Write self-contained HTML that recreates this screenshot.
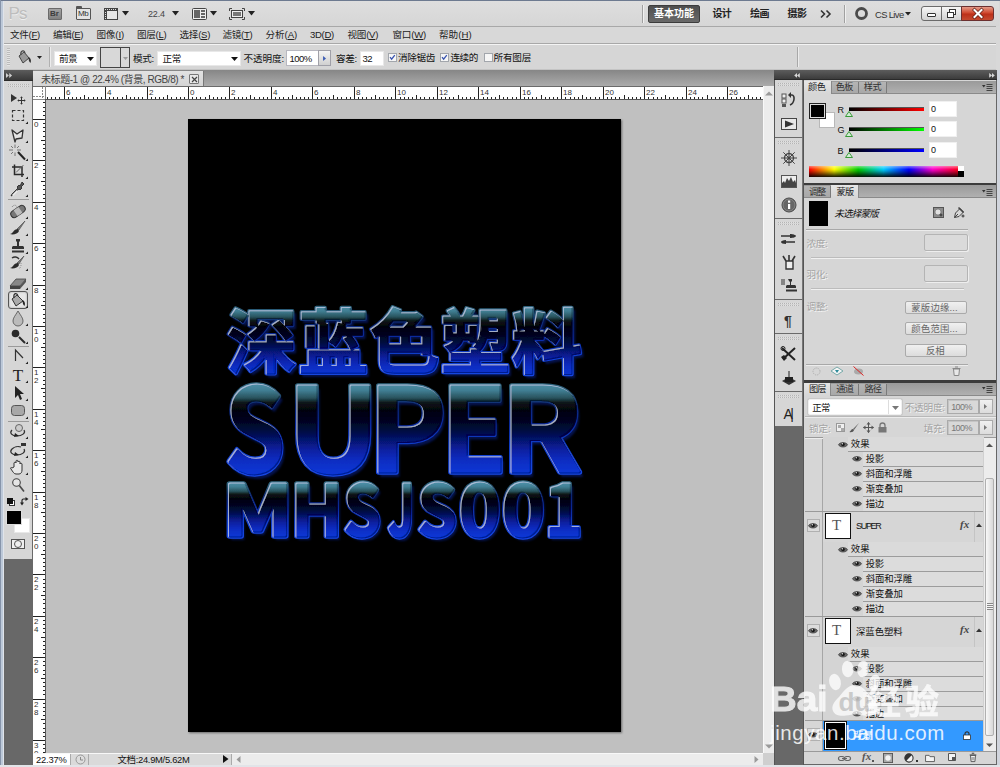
<!DOCTYPE html><html lang="zh"><head><meta charset="utf-8"><title>Photoshop</title><style>
*{box-sizing:border-box;margin:0;padding:0}
html,body{width:1000px;height:767px;overflow:hidden;background:#d6d6d6}
body{position:relative;font-family:"Liberation Sans","Noto Sans CJK SC",sans-serif;font-size:12px;color:#111}
.a{position:absolute}
.t{position:absolute;white-space:nowrap;line-height:1}
.menu .t{top:33px;font-size:11px;color:#222;letter-spacing:0}
.menu u{text-decoration:underline;text-underline-offset:1px}
.wb{background:#fff}
.sep{position:absolute;background:#a0a0a0}
svg{position:absolute;overflow:visible}
</style></head><body>
<div class="a" style="left:0;top:0;width:1000px;height:767px;background:#d8d8d8"></div>
<div class="a" id="appbar" style="left:1px;top:1px;width:998px;height:25px;background:linear-gradient(#dedede,#d6d6d6)"></div>
<div class="a" style="left:4px;top:26px;width:992px;height:1px;background:#a8a8a8"></div>


<!-- Br button -->
<div class="a" style="left:48px;top:8px;width:14px;height:12px;background:linear-gradient(#a4a4a4,#808080);border:1px solid #6a6a6a;border-radius:1px"></div>
<div class="t" style="left:50px;top:10px;font-size:8px;font-weight:bold;color:#3c3c3c">Br</div>
<!-- Mb button -->
<div class="a" style="left:76px;top:8px;width:15px;height:12px;background:#e4e4e4;border:1px solid #555;border-radius:1px"></div>
<div class="a" style="left:76px;top:6px;width:6px;height:3px;background:#555;border-radius:1px 1px 0 0"></div>
<div class="t" style="left:78px;top:10px;font-size:8px;color:#333;letter-spacing:-0.3px">Mb</div>
<!-- film icon -->
<svg style="left:104px;top:8px" width="14" height="12" viewBox="0 0 14 12"><rect x="0.5" y="0.5" width="13" height="11" fill="#e8e8e8" stroke="#444"/><rect x="0" y="0" width="14" height="3" fill="#444"/><rect x="0" y="3" width="3" height="9" fill="#444"/><g fill="#ddd"><rect x="1" y="1" width="1" height="1"/><rect x="3" y="1" width="1" height="1"/><rect x="5" y="1" width="1" height="1"/><rect x="7" y="1" width="1" height="1"/><rect x="9" y="1" width="1" height="1"/><rect x="11" y="1" width="1" height="1"/><rect x="1" y="4" width="1" height="1"/><rect x="1" y="6" width="1" height="1"/><rect x="1" y="8" width="1" height="1"/><rect x="1" y="10" width="1" height="1"/></g></svg>
<svg style="left:122px;top:11px" width="7" height="5"><path d="M0 0h7L3.5 4.5z" fill="#222"/></svg>
<svg style="left:172px;top:11px" width="7" height="5"><path d="M0 0h7L3.5 4.5z" fill="#222"/></svg>
<!-- arrange icon -->
<svg style="left:192px;top:8px" width="15" height="12" viewBox="0 0 15 12"><rect x="0.5" y="0.5" width="14" height="11" fill="#eee" stroke="#444" rx="1"/><rect x="2" y="2" width="6" height="8" fill="#666"/><rect x="9" y="2" width="4" height="2" fill="#666"/><rect x="9" y="5" width="4" height="2" fill="#666"/><rect x="9" y="8" width="4" height="2" fill="#666"/></svg>
<svg style="left:210px;top:11px" width="7" height="5"><path d="M0 0h7L3.5 4.5z" fill="#222"/></svg>
<!-- screen mode icon -->
<svg style="left:229px;top:8px" width="16" height="12" viewBox="0 0 16 12"><path d="M0.5 3V0.5H3M13 0.5h2.5V3M15.5 9v2.5H13M3 11.5H0.5V9" fill="none" stroke="#444"/><rect x="2.5" y="2.5" width="11" height="7" fill="#eee" stroke="#444"/><rect x="4" y="4" width="8" height="4" fill="#777"/></svg>
<svg style="left:248px;top:11px" width="7" height="5"><path d="M0 0h7L3.5 4.5z" fill="#222"/></svg>

<!-- workspace switcher -->
<div class="a" style="left:642px;top:5px;width:1px;height:18px;background:#a0a0a0"></div>
<div class="a" style="left:643px;top:5px;width:1px;height:18px;background:#f0f0f0"></div>
<div class="a" style="left:648px;top:5px;width:52px;height:18px;background:linear-gradient(#4e4e4e,#6a6a6a);border:1px solid #3c3c3c;border-radius:2px"></div>
<svg style="left:820px;top:10px" width="12" height="8" viewBox="0 0 12 8"><path d="M1 0.5L4.5 4L1 7.5M6.5 0.5L10 4L6.5 7.5" fill="none" stroke="#333" stroke-width="1.6"/></svg>
<div class="a" style="left:844px;top:5px;width:1px;height:18px;background:#a0a0a0"></div>
<div class="a" style="left:845px;top:5px;width:1px;height:18px;background:#f0f0f0"></div>
<svg style="left:855px;top:7px" width="13" height="13" viewBox="0 0 13 13"><circle cx="6.5" cy="6.5" r="5" fill="none" stroke="#4a4a4a" stroke-width="2.800"/></svg>
<svg style="left:905px;top:12px" width="6" height="4"><path d="M0 0h6L3 3.5z" fill="#222"/></svg>
<!-- window buttons -->
<div class="a" style="left:921px;top:6px;width:21px;height:14.500px;background:linear-gradient(#f6f6f6,#d2d2d2);border:1px solid #6b6b6b;border-radius:3px 0 0 3px"></div>
<div class="a" style="left:926.500px;top:13px;width:9px;height:4px;border:1px solid #333;background:#fff;border-radius:1px"></div>
<div class="a" style="left:941px;top:6px;width:21px;height:14.500px;background:linear-gradient(#f6f6f6,#d2d2d2);border:1px solid #6b6b6b"></div>
<div class="a" style="left:949px;top:9px;width:7px;height:6px;border:1px solid #333;background:#fff"></div>
<div class="a" style="left:946.500px;top:11.500px;width:7px;height:6px;border:1px solid #333;background:#fff"></div>
<div class="a" style="left:961px;top:6px;width:33px;height:14.500px;background:linear-gradient(#e49a88,#d0492f 45%,#bc3019 55%,#c44a30);border:1px solid #6b3030;border-radius:0 3px 3px 0"></div>
<svg style="left:972.500px;top:9px" width="10" height="9" viewBox="0 0 10 9"><path d="M1.500 1L8.500 8M8.500 1L1.500 8" stroke="#5a1a10" stroke-width="3.400" stroke-linecap="square"/><path d="M1.500 1L8.500 8M8.500 1L1.500 8" stroke="#fff" stroke-width="2.100" stroke-linecap="square"/></svg>

<div class="t" style="left:654px;top:8.5px;font-size:10px;color:#fff;letter-spacing:0.000px;font-weight:bold">基本功能</div>
<div class="t" style="left:712.5px;top:8.5px;font-size:10px;color:#222;letter-spacing:-0.750px;font-weight:bold">设计</div>
<div class="t" style="left:750px;top:8.5px;font-size:10px;color:#222;letter-spacing:-0.500px;font-weight:bold">绘画</div>
<div class="t" style="left:787.5px;top:8.5px;font-size:10px;color:#222;letter-spacing:-0.500px;font-weight:bold">摄影</div>
<div class="t" style="left:875px;top:9.5px;font-size:9.4px;color:#333;letter-spacing:-0.618px;">CS Live</div>
<div class="t" style="left:148px;top:9.5px;font-size:9px;color:#444;letter-spacing:-0.133px;">22.4</div>
<div class="t" style="left:8.6px;top:4.5px;font-size:17px;color:#bdbdbd;letter-spacing:-0.922px;text-shadow:0 1px 0 #eee">Ps</div>
<div class="t" style="left:10px;top:30px;font-size:9.6px;color:#222;letter-spacing:-0.294px;text-underline-offset:1px">文件(<u>F</u>)</div>
<div class="t" style="left:53px;top:30px;font-size:9.6px;color:#222;letter-spacing:-0.400px;text-underline-offset:1px">编辑(<u>E</u>)</div>
<div class="t" style="left:96.4px;top:30px;font-size:9.6px;color:#222;letter-spacing:-0.133px;text-underline-offset:1px">图像(<u>I</u>)</div>
<div class="t" style="left:137px;top:30px;font-size:9.6px;color:#222;letter-spacing:-0.307px;text-underline-offset:1px">图层(<u>L</u>)</div>
<div class="t" style="left:179.6px;top:30px;font-size:9.6px;color:#222;letter-spacing:-0.320px;text-underline-offset:1px">选择(<u>S</u>)</div>
<div class="t" style="left:222.6px;top:30px;font-size:9.6px;color:#222;letter-spacing:-0.334px;text-underline-offset:1px">滤镜(<u>T</u>)</div>
<div class="t" style="left:265.6px;top:30px;font-size:9.6px;color:#222;letter-spacing:-0.120px;text-underline-offset:1px">分析(<u>A</u>)</div>
<div class="t" style="left:310px;top:30px;font-size:9.6px;color:#222;letter-spacing:-0.322px;text-underline-offset:1px">3D(<u>D</u>)</div>
<div class="t" style="left:347.6px;top:30px;font-size:9.6px;color:#222;letter-spacing:-0.320px;text-underline-offset:1px">视图(<u>V</u>)</div>
<div class="t" style="left:392.4px;top:30px;font-size:9.6px;color:#222;letter-spacing:-0.211px;text-underline-offset:1px">窗口(<u>W</u>)</div>
<div class="t" style="left:439px;top:30px;font-size:9.6px;color:#222;letter-spacing:0.014px;text-underline-offset:1px">帮助(<u>H</u>)</div>

<div class="a" style="left:4px;top:44px;width:992px;height:26px;background:#d6d6d6;border-top:1px solid #f4f4f4;border-bottom:1px solid #c4c4c4"></div>
<div class="a" style="left:4px;top:43px;width:992px;height:1px;background:#a8a8a8"></div>
<div class="a" style="left:7px;top:48px;width:3px;height:18px;background:repeating-linear-gradient(#bbb 0 1px,#e4e4e4 1px 2px)"></div>
<!-- bucket -->
<svg style="left:16px;top:49px" width="17" height="16" viewBox="0 0 17 16"><path d="M3 7L8 3L13 9L7 14Z" fill="#999" stroke="#444" stroke-width="1"/><path d="M5 6C4 2 8 0 9 4" fill="none" stroke="#444" stroke-width="1.2"/><path d="M12.5 8C15 9 15.5 12 14.5 14C13 13 12.5 11 12.5 8Z" fill="#333"/></svg>
<svg style="left:37px;top:56px" width="5" height="3"><path d="M0 0h5L2.5 3z" fill="#222"/></svg>
<div class="sep" style="left:49px;top:47px;width:1px;height:20px;background:#b0b0b0"></div>
<div class="sep" style="left:50px;top:47px;width:1px;height:20px;background:#ececec"></div>
<div class="a wb" style="left:54px;top:51px;width:43px;height:15px;border:1px solid #e8e8e8"></div>
<svg style="left:87px;top:57px" width="7" height="4"><path d="M0 0h7L3.5 4z" fill="#111"/></svg>
<div class="a" style="left:100px;top:47px;width:30px;height:21px;border:1px solid #444;background:#d8d8d8"></div>
<div class="a" style="left:120px;top:47px;width:1px;height:21px;background:#444"></div>
<svg style="left:123px;top:57px" width="5" height="3"><path d="M0 0h5L2.5 3z" fill="#999"/></svg>
<div class="a wb" style="left:157px;top:51px;width:84px;height:15px;border:1px solid #e8e8e8"></div>
<svg style="left:231px;top:57px" width="7" height="4"><path d="M0 0h7L3.5 4z" fill="#111"/></svg>
<div class="a wb" style="left:286px;top:50px;width:33px;height:16px;border:1px solid #b8b8c0"></div>
<div class="a" style="left:318px;top:50px;width:13px;height:16px;border:1px solid #a0a0a8;background:linear-gradient(#f4f4f4,#d0d0d0)"></div>
<svg style="left:323px;top:56px" width="3.500" height="5" viewBox="0 0 4 6"><path d="M0 0v6L3.5 3z" fill="#3c5cb4"/></svg>
<div class="a wb" style="left:360px;top:51px;width:24px;height:15px;border:1px solid #e8e8e8"></div>

<div class="t" style="left:59px;top:53.5px;font-size:9.6px;color:#111;letter-spacing:-0.594px;">前景</div>
<div class="t" style="left:133px;top:53.5px;font-size:9.6px;color:#111;letter-spacing:-0.286px;">模式:</div>
<div class="t" style="left:162.4px;top:53.5px;font-size:9.6px;color:#111;letter-spacing:-0.294px;">正常</div>
<div class="t" style="left:243.6px;top:53.5px;font-size:9.6px;color:#111;letter-spacing:-0.129px;">不透明度:</div>
<div class="t" style="left:289.6px;top:53.7px;font-size:9.5px;color:#111;letter-spacing:-0.578px;">100%</div>
<div class="t" style="left:336px;top:53.5px;font-size:9.6px;color:#111;letter-spacing:-0.286px;">容差:</div>
<div class="t" style="left:362.4px;top:53.7px;font-size:9.5px;color:#111;letter-spacing:-0.489px;">32</div>
<div class="a" style="left:387.5px;top:53px;width:9px;height:9px;border:1px solid #a2a6ac;background:#f6f6f6"></div>
<svg style="left:388.5px;top:54px" width="7" height="7" viewBox="0 0 8 8"><path d="M1.2 3.6L3 6L6.6 1.2" fill="none" stroke="#3a55b0" stroke-width="1.5"/></svg>
<div class="t" style="left:398px;top:52.5px;font-size:9.6px;color:#111;letter-spacing:-0.344px;">消除锯齿</div>
<div class="a" style="left:439.5px;top:53px;width:9px;height:9px;border:1px solid #a2a6ac;background:#f6f6f6"></div>
<svg style="left:440.5px;top:54px" width="7" height="7" viewBox="0 0 8 8"><path d="M1.2 3.6L3 6L6.6 1.2" fill="none" stroke="#3a55b0" stroke-width="1.5"/></svg>
<div class="t" style="left:450.4px;top:52.5px;font-size:9.6px;color:#111;letter-spacing:-0.394px;">连续的</div>
<div class="a" style="left:483.5px;top:53px;width:9px;height:9px;border:1px solid #a2a6ac;background:#f6f6f6"></div>
<div class="t" style="left:493.6px;top:52.5px;font-size:9.6px;color:#111;letter-spacing:-0.244px;">所有图层</div>
<div class="sep" style="left:797px;top:47px;width:1px;height:20px;background:#a8a8a8"></div><div class="sep" style="left:798px;top:47px;width:1px;height:20px;background:#ececec"></div>

<!-- tab bar -->
<div class="a" style="left:33px;top:70px;width:741px;height:16px;background:linear-gradient(#868686,#ababab)"></div>
<div class="a" style="left:33px;top:71px;width:171px;height:15px;background:linear-gradient(#e2e2e2,#d4d4d4);border-right:1px solid #777"></div>

<div class="a" style="left:189px;top:74px;width:10px;height:10px;border:1px solid #777;background:#e8e8e8;border-radius:1px"></div>
<svg style="left:190.5px;top:75.5px" width="7" height="7" viewBox="0 0 7 7"><path d="M1 1L6 6M6 1L1 6" stroke="#444" stroke-width="1.2"/></svg>
<!-- canvas bg -->
<div class="a" style="left:33px;top:86px;width:741px;height:679px;background:#c0c0c0"></div>
<!-- document -->
<div class="a" style="left:188px;top:119px;width:433px;height:613px;background:#000;box-shadow:1px 1px 2px rgba(0,0,0,.45)"></div>

<div class="t" style="left:41px;top:74.5px;font-size:10px;color:#444;letter-spacing:-0.431px;">未标题-1 @ 22.4% (背景, RGB/8) *</div>
<svg style="left:33px;top:86.6px" width="730" height="13" viewBox="0 0 730 13" shape-rendering="crispEdges"><rect width="730" height="13" fill="#fff"/><g stroke="#222" stroke-width="1"><line x1="14.5" y1="10" x2="14.5" y2="13"/><line x1="18.5" y1="10" x2="18.5" y2="13"/><line x1="22.5" y1="10" x2="22.5" y2="13"/><line x1="26.5" y1="10" x2="26.5" y2="13"/><line x1="31.5" y1="0" x2="31.5" y2="13"/><line x1="35.5" y1="10" x2="35.5" y2="13"/><line x1="39.5" y1="10" x2="39.5" y2="13"/><line x1="43.5" y1="10" x2="43.5" y2="13"/><line x1="47.5" y1="10" x2="47.5" y2="13"/><line x1="51.5" y1="8" x2="51.5" y2="13"/><line x1="55.5" y1="10" x2="55.5" y2="13"/><line x1="60.5" y1="10" x2="60.5" y2="13"/><line x1="64.5" y1="10" x2="64.5" y2="13"/><line x1="68.5" y1="10" x2="68.5" y2="13"/><line x1="72.5" y1="0" x2="72.5" y2="13"/><line x1="76.5" y1="10" x2="76.5" y2="13"/><line x1="80.5" y1="10" x2="80.5" y2="13"/><line x1="84.5" y1="10" x2="84.5" y2="13"/><line x1="89.5" y1="10" x2="89.5" y2="13"/><line x1="93.5" y1="8" x2="93.5" y2="13"/><line x1="97.5" y1="10" x2="97.5" y2="13"/><line x1="101.5" y1="10" x2="101.5" y2="13"/><line x1="105.5" y1="10" x2="105.5" y2="13"/><line x1="109.5" y1="10" x2="109.5" y2="13"/><line x1="114.5" y1="0" x2="114.5" y2="13"/><line x1="118.5" y1="10" x2="118.5" y2="13"/><line x1="122.5" y1="10" x2="122.5" y2="13"/><line x1="126.5" y1="10" x2="126.5" y2="13"/><line x1="130.5" y1="10" x2="130.5" y2="13"/><line x1="134.5" y1="8" x2="134.5" y2="13"/><line x1="138.5" y1="10" x2="138.5" y2="13"/><line x1="143.5" y1="10" x2="143.5" y2="13"/><line x1="147.5" y1="10" x2="147.5" y2="13"/><line x1="151.5" y1="10" x2="151.5" y2="13"/><line x1="155.5" y1="0" x2="155.5" y2="13"/><line x1="159.5" y1="10" x2="159.5" y2="13"/><line x1="163.5" y1="10" x2="163.5" y2="13"/><line x1="167.5" y1="10" x2="167.5" y2="13"/><line x1="172.5" y1="10" x2="172.5" y2="13"/><line x1="176.5" y1="8" x2="176.5" y2="13"/><line x1="180.5" y1="10" x2="180.5" y2="13"/><line x1="184.5" y1="10" x2="184.5" y2="13"/><line x1="188.5" y1="10" x2="188.5" y2="13"/><line x1="192.5" y1="10" x2="192.5" y2="13"/><line x1="196.5" y1="0" x2="196.5" y2="13"/><line x1="201.5" y1="10" x2="201.5" y2="13"/><line x1="205.5" y1="10" x2="205.5" y2="13"/><line x1="209.5" y1="10" x2="209.5" y2="13"/><line x1="213.5" y1="10" x2="213.5" y2="13"/><line x1="217.5" y1="8" x2="217.5" y2="13"/><line x1="221.5" y1="10" x2="221.5" y2="13"/><line x1="226.5" y1="10" x2="226.5" y2="13"/><line x1="230.5" y1="10" x2="230.5" y2="13"/><line x1="234.5" y1="10" x2="234.5" y2="13"/><line x1="238.5" y1="0" x2="238.5" y2="13"/><line x1="242.5" y1="10" x2="242.5" y2="13"/><line x1="246.5" y1="10" x2="246.5" y2="13"/><line x1="250.5" y1="10" x2="250.5" y2="13"/><line x1="255.5" y1="10" x2="255.5" y2="13"/><line x1="259.5" y1="8" x2="259.5" y2="13"/><line x1="263.5" y1="10" x2="263.5" y2="13"/><line x1="267.5" y1="10" x2="267.5" y2="13"/><line x1="271.5" y1="10" x2="271.5" y2="13"/><line x1="275.5" y1="10" x2="275.5" y2="13"/><line x1="279.5" y1="0" x2="279.5" y2="13"/><line x1="284.5" y1="10" x2="284.5" y2="13"/><line x1="288.5" y1="10" x2="288.5" y2="13"/><line x1="292.5" y1="10" x2="292.5" y2="13"/><line x1="296.5" y1="10" x2="296.5" y2="13"/><line x1="300.5" y1="8" x2="300.5" y2="13"/><line x1="304.5" y1="10" x2="304.5" y2="13"/><line x1="308.5" y1="10" x2="308.5" y2="13"/><line x1="313.5" y1="10" x2="313.5" y2="13"/><line x1="317.5" y1="10" x2="317.5" y2="13"/><line x1="321.5" y1="0" x2="321.5" y2="13"/><line x1="325.5" y1="10" x2="325.5" y2="13"/><line x1="329.5" y1="10" x2="329.5" y2="13"/><line x1="333.5" y1="10" x2="333.5" y2="13"/><line x1="338.5" y1="10" x2="338.5" y2="13"/><line x1="342.5" y1="8" x2="342.5" y2="13"/><line x1="346.5" y1="10" x2="346.5" y2="13"/><line x1="350.5" y1="10" x2="350.5" y2="13"/><line x1="354.5" y1="10" x2="354.5" y2="13"/><line x1="358.5" y1="10" x2="358.5" y2="13"/><line x1="362.5" y1="0" x2="362.5" y2="13"/><line x1="367.5" y1="10" x2="367.5" y2="13"/><line x1="371.5" y1="10" x2="371.5" y2="13"/><line x1="375.5" y1="10" x2="375.5" y2="13"/><line x1="379.5" y1="10" x2="379.5" y2="13"/><line x1="383.5" y1="8" x2="383.5" y2="13"/><line x1="387.5" y1="10" x2="387.5" y2="13"/><line x1="391.5" y1="10" x2="391.5" y2="13"/><line x1="396.5" y1="10" x2="396.5" y2="13"/><line x1="400.5" y1="10" x2="400.5" y2="13"/><line x1="404.5" y1="0" x2="404.5" y2="13"/><line x1="408.5" y1="10" x2="408.5" y2="13"/><line x1="412.5" y1="10" x2="412.5" y2="13"/><line x1="416.5" y1="10" x2="416.5" y2="13"/><line x1="420.5" y1="10" x2="420.5" y2="13"/><line x1="425.5" y1="8" x2="425.5" y2="13"/><line x1="429.5" y1="10" x2="429.5" y2="13"/><line x1="433.5" y1="10" x2="433.5" y2="13"/><line x1="437.5" y1="10" x2="437.5" y2="13"/><line x1="441.5" y1="10" x2="441.5" y2="13"/><line x1="445.5" y1="0" x2="445.5" y2="13"/><line x1="450.5" y1="10" x2="450.5" y2="13"/><line x1="454.5" y1="10" x2="454.5" y2="13"/><line x1="458.5" y1="10" x2="458.5" y2="13"/><line x1="462.5" y1="10" x2="462.5" y2="13"/><line x1="466.5" y1="8" x2="466.5" y2="13"/><line x1="470.5" y1="10" x2="470.5" y2="13"/><line x1="474.5" y1="10" x2="474.5" y2="13"/><line x1="479.5" y1="10" x2="479.5" y2="13"/><line x1="483.5" y1="10" x2="483.5" y2="13"/><line x1="487.5" y1="0" x2="487.5" y2="13"/><line x1="491.5" y1="10" x2="491.5" y2="13"/><line x1="495.5" y1="10" x2="495.5" y2="13"/><line x1="499.5" y1="10" x2="499.5" y2="13"/><line x1="503.5" y1="10" x2="503.5" y2="13"/><line x1="508.5" y1="8" x2="508.5" y2="13"/><line x1="512.5" y1="10" x2="512.5" y2="13"/><line x1="516.5" y1="10" x2="516.5" y2="13"/><line x1="520.5" y1="10" x2="520.5" y2="13"/><line x1="524.5" y1="10" x2="524.5" y2="13"/><line x1="528.5" y1="0" x2="528.5" y2="13"/><line x1="532.5" y1="10" x2="532.5" y2="13"/><line x1="537.5" y1="10" x2="537.5" y2="13"/><line x1="541.5" y1="10" x2="541.5" y2="13"/><line x1="545.5" y1="10" x2="545.5" y2="13"/><line x1="549.5" y1="8" x2="549.5" y2="13"/><line x1="553.5" y1="10" x2="553.5" y2="13"/><line x1="557.5" y1="10" x2="557.5" y2="13"/><line x1="562.5" y1="10" x2="562.5" y2="13"/><line x1="566.5" y1="10" x2="566.5" y2="13"/><line x1="570.5" y1="0" x2="570.5" y2="13"/><line x1="574.5" y1="10" x2="574.5" y2="13"/><line x1="578.5" y1="10" x2="578.5" y2="13"/><line x1="582.5" y1="10" x2="582.5" y2="13"/><line x1="586.5" y1="10" x2="586.5" y2="13"/><line x1="591.5" y1="8" x2="591.5" y2="13"/><line x1="595.5" y1="10" x2="595.5" y2="13"/><line x1="599.5" y1="10" x2="599.5" y2="13"/><line x1="603.5" y1="10" x2="603.5" y2="13"/><line x1="607.5" y1="10" x2="607.5" y2="13"/><line x1="611.5" y1="0" x2="611.5" y2="13"/><line x1="615.5" y1="10" x2="615.5" y2="13"/><line x1="620.5" y1="10" x2="620.5" y2="13"/><line x1="624.5" y1="10" x2="624.5" y2="13"/><line x1="628.5" y1="10" x2="628.5" y2="13"/><line x1="632.5" y1="8" x2="632.5" y2="13"/><line x1="636.5" y1="10" x2="636.5" y2="13"/><line x1="640.5" y1="10" x2="640.5" y2="13"/><line x1="644.5" y1="10" x2="644.5" y2="13"/><line x1="649.5" y1="10" x2="649.5" y2="13"/><line x1="653.5" y1="0" x2="653.5" y2="13"/><line x1="657.5" y1="10" x2="657.5" y2="13"/><line x1="661.5" y1="10" x2="661.5" y2="13"/><line x1="665.5" y1="10" x2="665.5" y2="13"/><line x1="669.5" y1="10" x2="669.5" y2="13"/><line x1="674.5" y1="8" x2="674.5" y2="13"/><line x1="678.5" y1="10" x2="678.5" y2="13"/><line x1="682.5" y1="10" x2="682.5" y2="13"/><line x1="686.5" y1="10" x2="686.5" y2="13"/><line x1="690.5" y1="10" x2="690.5" y2="13"/><line x1="694.5" y1="0" x2="694.5" y2="13"/><line x1="698.5" y1="10" x2="698.5" y2="13"/><line x1="703.5" y1="10" x2="703.5" y2="13"/><line x1="707.5" y1="10" x2="707.5" y2="13"/><line x1="711.5" y1="10" x2="711.5" y2="13"/><line x1="715.5" y1="8" x2="715.5" y2="13"/><line x1="719.5" y1="10" x2="719.5" y2="13"/><line x1="723.5" y1="10" x2="723.5" y2="13"/><line x1="727.5" y1="10" x2="727.5" y2="13"/></g><g font-family="Liberation Sans, sans-serif" font-size="8" fill="#333"><text x="33" y="8">6</text><text x="74" y="8">4</text><text x="116" y="8">2</text><text x="157" y="8">0</text><text x="198" y="8">2</text><text x="240" y="8">4</text><text x="281" y="8">6</text><text x="323" y="8">8</text><text x="364" y="8">10</text><text x="406" y="8">12</text><text x="447" y="8">14</text><text x="489" y="8">16</text><text x="530" y="8">18</text><text x="572" y="8">20</text><text x="613" y="8">22</text><text x="655" y="8">24</text><text x="696" y="8">26</text></g><rect x="0" y="0" width="13" height="13" fill="#fff"/><g stroke="#888" stroke-dasharray="2 1"><line x1="0" y1="9.5" x2="13" y2="9.5"/><line x1="9.5" y1="0" x2="9.5" y2="13"/></g></svg>
<svg style="left:33px;top:99px" width="13" height="654" viewBox="0 0 13 654" shape-rendering="crispEdges"><rect width="13" height="654" fill="#fff"/><g stroke="#222" stroke-width="1"><line y1="3.5" x1="10" y2="3.5" x2="13"/><line y1="8.5" x1="10" y2="8.5" x2="13"/><line y1="12.5" x1="10" y2="12.5" x2="13"/><line y1="16.5" x1="10" y2="16.5" x2="13"/><line y1="20.5" x1="0" y2="20.5" x2="13"/><line y1="24.5" x1="10" y2="24.5" x2="13"/><line y1="28.5" x1="10" y2="28.5" x2="13"/><line y1="32.5" x1="10" y2="32.5" x2="13"/><line y1="37.5" x1="10" y2="37.5" x2="13"/><line y1="41.5" x1="8" y2="41.5" x2="13"/><line y1="45.5" x1="10" y2="45.5" x2="13"/><line y1="49.5" x1="10" y2="49.5" x2="13"/><line y1="53.5" x1="10" y2="53.5" x2="13"/><line y1="57.5" x1="10" y2="57.5" x2="13"/><line y1="61.5" x1="0" y2="61.5" x2="13"/><line y1="66.5" x1="10" y2="66.5" x2="13"/><line y1="70.5" x1="10" y2="70.5" x2="13"/><line y1="74.5" x1="10" y2="74.5" x2="13"/><line y1="78.5" x1="10" y2="78.5" x2="13"/><line y1="82.5" x1="8" y2="82.5" x2="13"/><line y1="86.5" x1="10" y2="86.5" x2="13"/><line y1="90.5" x1="10" y2="90.5" x2="13"/><line y1="95.5" x1="10" y2="95.5" x2="13"/><line y1="99.5" x1="10" y2="99.5" x2="13"/><line y1="103.5" x1="0" y2="103.5" x2="13"/><line y1="107.5" x1="10" y2="107.5" x2="13"/><line y1="111.5" x1="10" y2="111.5" x2="13"/><line y1="115.5" x1="10" y2="115.5" x2="13"/><line y1="119.5" x1="10" y2="119.5" x2="13"/><line y1="124.5" x1="8" y2="124.5" x2="13"/><line y1="128.5" x1="10" y2="128.5" x2="13"/><line y1="132.5" x1="10" y2="132.5" x2="13"/><line y1="136.5" x1="10" y2="136.5" x2="13"/><line y1="140.5" x1="10" y2="140.5" x2="13"/><line y1="144.5" x1="0" y2="144.5" x2="13"/><line y1="148.5" x1="10" y2="148.5" x2="13"/><line y1="152.5" x1="10" y2="152.5" x2="13"/><line y1="157.5" x1="10" y2="157.5" x2="13"/><line y1="161.5" x1="10" y2="161.5" x2="13"/><line y1="165.5" x1="8" y2="165.5" x2="13"/><line y1="169.5" x1="10" y2="169.5" x2="13"/><line y1="173.5" x1="10" y2="173.5" x2="13"/><line y1="177.5" x1="10" y2="177.5" x2="13"/><line y1="181.5" x1="10" y2="181.5" x2="13"/><line y1="186.5" x1="0" y2="186.5" x2="13"/><line y1="190.5" x1="10" y2="190.5" x2="13"/><line y1="194.5" x1="10" y2="194.5" x2="13"/><line y1="198.5" x1="10" y2="198.5" x2="13"/><line y1="202.5" x1="10" y2="202.5" x2="13"/><line y1="206.5" x1="8" y2="206.5" x2="13"/><line y1="210.5" x1="10" y2="210.5" x2="13"/><line y1="215.5" x1="10" y2="215.5" x2="13"/><line y1="219.5" x1="10" y2="219.5" x2="13"/><line y1="223.5" x1="10" y2="223.5" x2="13"/><line y1="227.5" x1="0" y2="227.5" x2="13"/><line y1="231.5" x1="10" y2="231.5" x2="13"/><line y1="235.5" x1="10" y2="235.5" x2="13"/><line y1="239.5" x1="10" y2="239.5" x2="13"/><line y1="244.5" x1="10" y2="244.5" x2="13"/><line y1="248.5" x1="8" y2="248.5" x2="13"/><line y1="252.5" x1="10" y2="252.5" x2="13"/><line y1="256.5" x1="10" y2="256.5" x2="13"/><line y1="260.5" x1="10" y2="260.5" x2="13"/><line y1="264.5" x1="10" y2="264.5" x2="13"/><line y1="268.5" x1="0" y2="268.5" x2="13"/><line y1="273.5" x1="10" y2="273.5" x2="13"/><line y1="277.5" x1="10" y2="277.5" x2="13"/><line y1="281.5" x1="10" y2="281.5" x2="13"/><line y1="285.5" x1="10" y2="285.5" x2="13"/><line y1="289.5" x1="8" y2="289.5" x2="13"/><line y1="293.5" x1="10" y2="293.5" x2="13"/><line y1="297.5" x1="10" y2="297.5" x2="13"/><line y1="302.5" x1="10" y2="302.5" x2="13"/><line y1="306.5" x1="10" y2="306.5" x2="13"/><line y1="310.5" x1="0" y2="310.5" x2="13"/><line y1="314.5" x1="10" y2="314.5" x2="13"/><line y1="318.5" x1="10" y2="318.5" x2="13"/><line y1="322.5" x1="10" y2="322.5" x2="13"/><line y1="326.5" x1="10" y2="326.5" x2="13"/><line y1="330.5" x1="8" y2="330.5" x2="13"/><line y1="335.5" x1="10" y2="335.5" x2="13"/><line y1="339.5" x1="10" y2="339.5" x2="13"/><line y1="343.5" x1="10" y2="343.5" x2="13"/><line y1="347.5" x1="10" y2="347.5" x2="13"/><line y1="351.5" x1="0" y2="351.5" x2="13"/><line y1="355.5" x1="10" y2="355.5" x2="13"/><line y1="359.5" x1="10" y2="359.5" x2="13"/><line y1="364.5" x1="10" y2="364.5" x2="13"/><line y1="368.5" x1="10" y2="368.5" x2="13"/><line y1="372.5" x1="8" y2="372.5" x2="13"/><line y1="376.5" x1="10" y2="376.5" x2="13"/><line y1="380.5" x1="10" y2="380.5" x2="13"/><line y1="384.5" x1="10" y2="384.5" x2="13"/><line y1="388.5" x1="10" y2="388.5" x2="13"/><line y1="393.5" x1="0" y2="393.5" x2="13"/><line y1="397.5" x1="10" y2="397.5" x2="13"/><line y1="401.5" x1="10" y2="401.5" x2="13"/><line y1="405.5" x1="10" y2="405.5" x2="13"/><line y1="409.5" x1="10" y2="409.5" x2="13"/><line y1="413.5" x1="8" y2="413.5" x2="13"/><line y1="417.5" x1="10" y2="417.5" x2="13"/><line y1="422.5" x1="10" y2="422.5" x2="13"/><line y1="426.5" x1="10" y2="426.5" x2="13"/><line y1="430.5" x1="10" y2="430.5" x2="13"/><line y1="434.5" x1="0" y2="434.5" x2="13"/><line y1="438.5" x1="10" y2="438.5" x2="13"/><line y1="442.5" x1="10" y2="442.5" x2="13"/><line y1="446.5" x1="10" y2="446.5" x2="13"/><line y1="451.5" x1="10" y2="451.5" x2="13"/><line y1="455.5" x1="8" y2="455.5" x2="13"/><line y1="459.5" x1="10" y2="459.5" x2="13"/><line y1="463.5" x1="10" y2="463.5" x2="13"/><line y1="467.5" x1="10" y2="467.5" x2="13"/><line y1="471.5" x1="10" y2="471.5" x2="13"/><line y1="475.5" x1="0" y2="475.5" x2="13"/><line y1="480.5" x1="10" y2="480.5" x2="13"/><line y1="484.5" x1="10" y2="484.5" x2="13"/><line y1="488.5" x1="10" y2="488.5" x2="13"/><line y1="492.5" x1="10" y2="492.5" x2="13"/><line y1="496.5" x1="8" y2="496.5" x2="13"/><line y1="500.5" x1="10" y2="500.5" x2="13"/><line y1="504.5" x1="10" y2="504.5" x2="13"/><line y1="509.5" x1="10" y2="509.5" x2="13"/><line y1="513.5" x1="10" y2="513.5" x2="13"/><line y1="517.5" x1="0" y2="517.5" x2="13"/><line y1="521.5" x1="10" y2="521.5" x2="13"/><line y1="525.5" x1="10" y2="525.5" x2="13"/><line y1="529.5" x1="10" y2="529.5" x2="13"/><line y1="533.5" x1="10" y2="533.5" x2="13"/><line y1="538.5" x1="8" y2="538.5" x2="13"/><line y1="542.5" x1="10" y2="542.5" x2="13"/><line y1="546.5" x1="10" y2="546.5" x2="13"/><line y1="550.5" x1="10" y2="550.5" x2="13"/><line y1="554.5" x1="10" y2="554.5" x2="13"/><line y1="558.5" x1="0" y2="558.5" x2="13"/><line y1="562.5" x1="10" y2="562.5" x2="13"/><line y1="566.5" x1="10" y2="566.5" x2="13"/><line y1="571.5" x1="10" y2="571.5" x2="13"/><line y1="575.5" x1="10" y2="575.5" x2="13"/><line y1="579.5" x1="8" y2="579.5" x2="13"/><line y1="583.5" x1="10" y2="583.5" x2="13"/><line y1="587.5" x1="10" y2="587.5" x2="13"/><line y1="591.5" x1="10" y2="591.5" x2="13"/><line y1="595.5" x1="10" y2="595.5" x2="13"/><line y1="600.5" x1="0" y2="600.5" x2="13"/><line y1="604.5" x1="10" y2="604.5" x2="13"/><line y1="608.5" x1="10" y2="608.5" x2="13"/><line y1="612.5" x1="10" y2="612.5" x2="13"/><line y1="616.5" x1="10" y2="616.5" x2="13"/><line y1="620.5" x1="8" y2="620.5" x2="13"/><line y1="624.5" x1="10" y2="624.5" x2="13"/><line y1="629.5" x1="10" y2="629.5" x2="13"/><line y1="633.5" x1="10" y2="633.5" x2="13"/><line y1="637.5" x1="10" y2="637.5" x2="13"/><line y1="641.5" x1="0" y2="641.5" x2="13"/><line y1="645.5" x1="10" y2="645.5" x2="13"/><line y1="649.5" x1="10" y2="649.5" x2="13"/><line y1="653.5" x1="10" y2="653.5" x2="13"/></g><g font-family="Liberation Sans, sans-serif" font-size="8" fill="#333"><text x="1" y="28">0</text><text x="1" y="69">2</text><text x="1" y="111">4</text><text x="1" y="152">6</text><text x="1" y="194">8</text><text x="1" y="235">1</text><text x="1" y="243">0</text><text x="1" y="276">1</text><text x="1" y="284">2</text><text x="1" y="318">1</text><text x="1" y="326">4</text><text x="1" y="359">1</text><text x="1" y="367">6</text><text x="1" y="401">1</text><text x="1" y="409">8</text><text x="1" y="442">2</text><text x="1" y="450">0</text><text x="1" y="483">2</text><text x="1" y="491">2</text><text x="1" y="525">2</text><text x="1" y="533">4</text><text x="1" y="566">2</text><text x="1" y="574">6</text><text x="1" y="608">2</text><text x="1" y="616">8</text><text x="1" y="649">3</text><text x="1" y="657">0</text></g></svg>
<div class="a" style="left:33px;top:98.6px;width:13px;height:1px;background:#888"></div><div class="a" style="left:33px;top:86px;width:730px;height:1px;background:#6a6a6a"></div><div class="a" style="left:45px;top:86px;width:1px;height:13px;background:#888"></div>
<div class="a" style="left:45px;top:99px;width:1px;height:654px;background:#555"></div><div class="a" style="left:46px;top:98.6px;width:717px;height:1px;background:#555"></div>

<div class="a" style="left:763px;top:86px;width:11px;height:667px;background:#ececec;border-left:1px solid #f8f8f8"></div>
<svg style="left:765px;top:91px" width="8" height="5"><path d="M0 4.5L4 0.5L8 4.5z" fill="#9a9a9a"/></svg>
<svg style="left:765px;top:744px" width="8" height="5"><path d="M0 0.5L4 4.5L8 0.5z" fill="#9a9a9a"/></svg>
<div class="a" style="left:33px;top:753px;width:730px;height:12px;background:#ececec;border-top:1px solid #f8f8f8"></div>
<div class="a" style="left:763px;top:753px;width:11px;height:12px;background:#cfcfcf"></div>
<div class="a wb" style="left:33px;top:754px;width:37px;height:11px"></div>
<div class="a" style="left:70px;top:754px;width:161px;height:11px;background:#dadada;border-left:1px solid #aaa"></div>
<svg style="left:75px;top:754px" width="11" height="11" viewBox="0 0 11 11"><circle cx="5.5" cy="5.5" r="4.5" fill="#ddd" stroke="#999"/><path d="M5.5 3v3h2.5" fill="none" stroke="#888"/></svg>
<div class="a" style="left:88px;top:754px;width:1px;height:11px;background:#aaa"></div>
<svg style="left:223px;top:755px" width="6" height="8"><path d="M0 0v8L5.5 4z" fill="#111"/></svg>
<div class="a" style="left:231px;top:754px;width:1px;height:11px;background:#aaa"></div>
<svg style="left:236px;top:756px" width="5" height="7"><path d="M4.5 0v7L0.5 3.5z" fill="#9a9a9a"/></svg>
<svg style="left:754px;top:756px" width="5" height="7"><path d="M0.5 0v7L4.5 3.5z" fill="#9a9a9a"/></svg>

<div class="t" style="left:36px;top:755px;font-size:9.4px;color:#111;letter-spacing:-0.216px;">22.37%</div>
<div class="t" style="left:117.5px;top:755px;font-size:9.4px;color:#111;letter-spacing:-0.291px;">文档:24.9M/5.62M</div>

<svg style="left:188px;top:119px" width="433" height="613" viewBox="188 119 433 613" role="img" aria-label="深蓝色塑料 SUPER MHSJS001">
<title>深蓝色塑料 SUPER MHSJS001</title>
<defs>
<linearGradient id="ga" gradientUnits="userSpaceOnUse" x1="0" y1="306" x2="0" y2="377"><stop offset="0" stop-color="#4c8ea6"/><stop offset="0.07" stop-color="#417f94"/><stop offset="0.155" stop-color="#28525c"/><stop offset="0.21" stop-color="#0a1414"/><stop offset="0.29" stop-color="#05050f"/><stop offset="0.4" stop-color="#04051e"/><stop offset="0.51" stop-color="#050a3c"/><stop offset="0.62" stop-color="#06146e"/><stop offset="0.73" stop-color="#0820a0"/><stop offset="0.84" stop-color="#0a2cc0"/><stop offset="0.95" stop-color="#0a34d0"/><stop offset="1" stop-color="#0a36d4"/></linearGradient><linearGradient id="gao" gradientUnits="userSpaceOnUse" x1="0" y1="304" x2="0" y2="379"><stop offset="0" stop-color="#356c84"/><stop offset="0.12" stop-color="#22506e"/><stop offset="0.25" stop-color="#0c2a78"/><stop offset="0.45" stop-color="#0a2aa0"/><stop offset="0.7" stop-color="#1040d0"/><stop offset="1" stop-color="#1648e4"/></linearGradient><linearGradient id="gb" gradientUnits="userSpaceOnUse" x1="0" y1="384" x2="0" y2="474"><stop offset="0" stop-color="#4c8ea6"/><stop offset="0.07" stop-color="#417f94"/><stop offset="0.155" stop-color="#28525c"/><stop offset="0.21" stop-color="#0a1414"/><stop offset="0.29" stop-color="#05050f"/><stop offset="0.4" stop-color="#04051e"/><stop offset="0.51" stop-color="#050a3c"/><stop offset="0.62" stop-color="#06146e"/><stop offset="0.73" stop-color="#0820a0"/><stop offset="0.84" stop-color="#0a2cc0"/><stop offset="0.95" stop-color="#0a34d0"/><stop offset="1" stop-color="#0a36d4"/></linearGradient><linearGradient id="gbo" gradientUnits="userSpaceOnUse" x1="0" y1="382" x2="0" y2="476"><stop offset="0" stop-color="#356c84"/><stop offset="0.12" stop-color="#22506e"/><stop offset="0.25" stop-color="#0c2a78"/><stop offset="0.45" stop-color="#0a2aa0"/><stop offset="0.7" stop-color="#1040d0"/><stop offset="1" stop-color="#1648e4"/></linearGradient><linearGradient id="gc" gradientUnits="userSpaceOnUse" x1="0" y1="483" x2="0" y2="537"><stop offset="0" stop-color="#4c8ea6"/><stop offset="0.07" stop-color="#417f94"/><stop offset="0.155" stop-color="#28525c"/><stop offset="0.21" stop-color="#0a1414"/><stop offset="0.29" stop-color="#05050f"/><stop offset="0.4" stop-color="#04051e"/><stop offset="0.51" stop-color="#050a3c"/><stop offset="0.62" stop-color="#06146e"/><stop offset="0.73" stop-color="#0820a0"/><stop offset="0.84" stop-color="#0a2cc0"/><stop offset="0.95" stop-color="#0a34d0"/><stop offset="1" stop-color="#0a36d4"/></linearGradient><linearGradient id="gco" gradientUnits="userSpaceOnUse" x1="0" y1="481" x2="0" y2="539"><stop offset="0" stop-color="#356c84"/><stop offset="0.12" stop-color="#22506e"/><stop offset="0.25" stop-color="#0c2a78"/><stop offset="0.45" stop-color="#0a2aa0"/><stop offset="0.7" stop-color="#1040d0"/><stop offset="1" stop-color="#1648e4"/></linearGradient>
<filter id="sh" x="-5%" y="-10%" width="110%" height="125%"><feGaussianBlur stdDeviation="1.1"/></filter>
<filter id="bevel" x="-2%" y="-5%" width="104%" height="110%">
<feOffset in="SourceAlpha" dx="1.2" dy="1.2" result="o1"/>
<feComposite in="SourceAlpha" in2="o1" operator="out" result="hl"/>
<feFlood flood-color="#c0cce8" flood-opacity=".7"/><feComposite in2="hl" operator="in"/><feGaussianBlur stdDeviation=".45" result="hlc"/>
<feOffset in="SourceAlpha" dx="-1.2" dy="-1.2" result="o2"/>
<feComposite in="SourceAlpha" in2="o2" operator="out" result="sd"/>
<feFlood flood-color="#020830" flood-opacity=".6"/><feComposite in2="sd" operator="in"/><feGaussianBlur stdDeviation=".5" result="sdc"/>
<feMerge><feMergeNode in="SourceGraphic"/><feMergeNode in="sdc"/><feMergeNode in="hlc"/></feMerge>
</filter>
</defs>
<g font-family="'Noto Sans CJK SC','Liberation Sans',sans-serif" font-weight="700" stroke-linejoin="round">
<text x="226.5 297.7 368.9 440.1 511.3" y="367.8" font-size="70.5" fill="#0b2fc0" stroke="#0b2fc0" stroke-width="2" opacity=".4" transform="translate(2.5,3.5)" filter="url(#sh)">深蓝色塑料</text><text x="226.5 297.7 368.9 440.1 511.3" y="367.8" font-size="70.5" fill="none" stroke="url(#gao)" stroke-width="4.0">深蓝色塑料</text><text x="226.5 297.7 368.9 440.1 511.3" y="367.8" font-size="70.5" fill="url(#ga)" stroke="url(#ga)" stroke-width="1.6" filter="url(#bevel)">深蓝色塑料</text>
<text y="472" font-size="116" fill="#0b2fc0" stroke="#0b2fc0" stroke-width="2" opacity=".4" transform="translate(2.5,3.5)" filter="url(#sh)"><tspan x="224.6" textLength="60.6" lengthAdjust="spacingAndGlyphs">S</tspan><tspan x="286.9" textLength="92.2" lengthAdjust="spacingAndGlyphs">U</tspan><tspan x="368.0" textLength="78.3" lengthAdjust="spacingAndGlyphs">P</tspan><tspan x="441.0" textLength="65.6" lengthAdjust="spacingAndGlyphs">E</tspan><tspan x="500.9" textLength="81.2" lengthAdjust="spacingAndGlyphs">R</tspan></text><text y="472" font-size="116" fill="none" stroke="url(#gbo)" stroke-width="5.4"><tspan x="224.6" textLength="60.6" lengthAdjust="spacingAndGlyphs">S</tspan><tspan x="286.9" textLength="92.2" lengthAdjust="spacingAndGlyphs">U</tspan><tspan x="368.0" textLength="78.3" lengthAdjust="spacingAndGlyphs">P</tspan><tspan x="441.0" textLength="65.6" lengthAdjust="spacingAndGlyphs">E</tspan><tspan x="500.9" textLength="81.2" lengthAdjust="spacingAndGlyphs">R</tspan></text><text y="472" font-size="116" fill="url(#gb)" stroke="url(#gb)" stroke-width="2.8" filter="url(#bevel)"><tspan x="224.6" textLength="60.6" lengthAdjust="spacingAndGlyphs">S</tspan><tspan x="286.9" textLength="92.2" lengthAdjust="spacingAndGlyphs">U</tspan><tspan x="368.0" textLength="78.3" lengthAdjust="spacingAndGlyphs">P</tspan><tspan x="441.0" textLength="65.6" lengthAdjust="spacingAndGlyphs">E</tspan><tspan x="500.9" textLength="81.2" lengthAdjust="spacingAndGlyphs">R</tspan></text>
<text y="535.5" font-size="70" fill="#0b2fc0" stroke="#0b2fc0" stroke-width="2" opacity=".4" transform="translate(2.5,3.5)" filter="url(#sh)"><tspan x="222.2" textLength="70.6" lengthAdjust="spacingAndGlyphs">M</tspan><tspan x="290.4" textLength="52.1" lengthAdjust="spacingAndGlyphs">H</tspan><tspan x="343.2" textLength="37.5" lengthAdjust="spacingAndGlyphs">S</tspan><tspan x="387.6" textLength="26.8" lengthAdjust="spacingAndGlyphs">J</tspan><tspan x="417.0" textLength="39.8" lengthAdjust="spacingAndGlyphs">S</tspan><tspan x="458.6" textLength="41.8" lengthAdjust="spacingAndGlyphs">0</tspan><tspan x="501.5" textLength="43.0" lengthAdjust="spacingAndGlyphs">0</tspan><tspan x="544.4" textLength="37.9" lengthAdjust="spacingAndGlyphs">1</tspan></text><text y="535.5" font-size="70" fill="none" stroke="url(#gco)" stroke-width="5.4"><tspan x="222.2" textLength="70.6" lengthAdjust="spacingAndGlyphs">M</tspan><tspan x="290.4" textLength="52.1" lengthAdjust="spacingAndGlyphs">H</tspan><tspan x="343.2" textLength="37.5" lengthAdjust="spacingAndGlyphs">S</tspan><tspan x="387.6" textLength="26.8" lengthAdjust="spacingAndGlyphs">J</tspan><tspan x="417.0" textLength="39.8" lengthAdjust="spacingAndGlyphs">S</tspan><tspan x="458.6" textLength="41.8" lengthAdjust="spacingAndGlyphs">0</tspan><tspan x="501.5" textLength="43.0" lengthAdjust="spacingAndGlyphs">0</tspan><tspan x="544.4" textLength="37.9" lengthAdjust="spacingAndGlyphs">1</tspan></text><text y="535.5" font-size="70" fill="url(#gc)" stroke="url(#gc)" stroke-width="3.0" filter="url(#bevel)"><tspan x="222.2" textLength="70.6" lengthAdjust="spacingAndGlyphs">M</tspan><tspan x="290.4" textLength="52.1" lengthAdjust="spacingAndGlyphs">H</tspan><tspan x="343.2" textLength="37.5" lengthAdjust="spacingAndGlyphs">S</tspan><tspan x="387.6" textLength="26.8" lengthAdjust="spacingAndGlyphs">J</tspan><tspan x="417.0" textLength="39.8" lengthAdjust="spacingAndGlyphs">S</tspan><tspan x="458.6" textLength="41.8" lengthAdjust="spacingAndGlyphs">0</tspan><tspan x="501.5" textLength="43.0" lengthAdjust="spacingAndGlyphs">0</tspan><tspan x="544.4" textLength="37.9" lengthAdjust="spacingAndGlyphs">1</tspan></text>
</g>
</svg>


<div class="a" style="left:4px;top:70px;width:29px;height:11px;background:linear-gradient(#5c5c5c,#3a3a3a);border-bottom:1px solid #2a2a2a"></div>
<svg style="left:6px;top:73px" width="6.500" height="5" viewBox="0 0 8 6"><path d="M0 0L3.5 3L0 6zM4 0L7.5 3L4 6z" fill="#d0d0d0"/></svg>
<div class="a" style="left:4px;top:81px;width:29px;height:478px;background:#d6d6d6;border-right:1px solid #6a6a6a"></div>
<div class="a" style="left:4px;top:559px;width:29px;height:206px;background:#686868"></div>
<div class="a" style="left:8px;top:84px;width:21px;height:1px;background:repeating-linear-gradient(90deg,#b4b4b4 0 1px,#e2e2e2 1px 2px)"></div><div class="a" style="left:8px;top:86px;width:21px;height:1px;background:repeating-linear-gradient(90deg,#b4b4b4 0 1px,#e2e2e2 1px 2px)"></div>

<svg style="left:4px;top:90px" width="28" height="18" viewBox="0 0 28 18"><path d="M7 4v8l6 -4z" fill="#333"/><path d="M17.500 7.500v6M14.500 10.500h6" stroke="#333" stroke-width="1"/><path d="M17.500 6.300l-1.300 1.700h2.600zM17.500 14.700l-1.300 -1.700h2.600zM13.300 10.500l1.700 -1.300v2.600zM21.700 10.500l-1.700 -1.300v2.600z" fill="#333"/></svg>
<svg style="left:4px;top:107px" width="28" height="18" viewBox="0 0 28 18"><rect x="8.500" y="3.500" width="11" height="10" fill="none" stroke="#333" stroke-width="1.2" stroke-dasharray="3 2"/><path d="M24 17h-2.500l2.500 -2.500z" fill="#222"/></svg>
<svg style="left:4px;top:126px" width="28" height="18" viewBox="0 0 28 18"><path d="M8 4L13 8L19 4L18 12L12 13L11 16L10 12Z" fill="#e4e4e4" stroke="#333" stroke-width="1.3" stroke-linejoin="round"/><path d="M24 17h-2.500l2.500 -2.500z" fill="#222"/></svg>
<svg style="left:4px;top:144px" width="28" height="18" viewBox="0 0 28 18"><path d="M14 8L21 15.500" stroke="#222" stroke-width="2"/><g stroke="#777" stroke-width="1"><path d="M11 0.500v3.500M11 8.500v3.500M5 6h4M13 6h4M7 2l2 2M15 2l-2 2M7 10l2 -2"/></g><path d="M24 17h-2.500l2.500 -2.500z" fill="#222"/></svg>
<svg style="left:4px;top:162px" width="28" height="18" viewBox="0 0 28 18"><path d="M10.500 2.500v10h9.500M8 5h10v10" fill="none" stroke="#2a2a2a" stroke-width="1.500"/><path d="M19.500 3L12 10.500" stroke="#666" stroke-width="1"/><path d="M24 17h-2.500l2.500 -2.500z" fill="#222"/></svg>
<svg style="left:4px;top:180px" width="28" height="18" viewBox="0 0 28 18"><path d="M18 2l2 2l-3 3l1 1l-2 2l-1 -1l-6 6l-2 1l1 -2l6 -6l-1 -1l2 -2l1 1z" fill="#555" stroke="#222" stroke-width=".8"/><path d="M8 15l5 -5l1 1l-5 5z" fill="#eee"/><path d="M24 17h-2.500l2.500 -2.500z" fill="#222"/></svg>
<div class="a" style="left:8px;top:199px;width:21px;height:1px;background:#9a9a9a"></div>
<svg style="left:4px;top:202px" width="28" height="18" viewBox="0 0 28 18"><path d="M8 5c2-3 5-2 5 1" fill="none" stroke="#888" stroke-dasharray="1 1"/><rect x="6" y="6" width="16" height="7" rx="3.5" transform="rotate(-35 14 9.500)" fill="#777" stroke="#333"/><rect x="11" y="6" width="6" height="7" transform="rotate(-35 14 9.500)" fill="#bbb"/><path d="M24 17h-2.500l2.500 -2.500z" fill="#222"/></svg>
<svg style="left:4px;top:219px" width="28" height="18" viewBox="0 0 28 18"><path d="M21 2L13 10l2 1z" fill="#777" stroke="#444" stroke-width=".6"/><path d="M14 10c-2 0 -4 1 -5 3c-1 1 -2 2 -3 2c3 1 8 0 9 -3z" fill="#2a2a2a"/><path d="M24 17h-2.500l2.500 -2.500z" fill="#222"/></svg>
<svg style="left:4px;top:237px" width="28" height="18" viewBox="0 0 28 18"><path d="M12 2h4v2l-1 1v4h4l1 1v2H8v-2l1 -1h4V5l-1 -1z" fill="#333"/><rect x="8" y="13.500" width="12" height="2" fill="#333"/><path d="M24 17h-2.500l2.500 -2.500z" fill="#222"/></svg>
<svg style="left:4px;top:254px" width="28" height="18" viewBox="0 0 28 18"><path d="M20 2L13 9l2 1z" fill="#777" stroke="#444" stroke-width=".6"/><path d="M14 9c-2 0 -4 1 -5 3c-1 1 -2 2 -3 2c3 1 8 0 9 -3z" fill="#2a2a2a"/><path d="M8 4a5 5 0 0 1 7 1" fill="none" stroke="#333" stroke-width="1.4"/><path d="M17 9a5 6 0 0 1 -2 6" fill="none" stroke="#888" stroke-dasharray="1 1"/><path d="M24 17h-2.500l2.500 -2.500z" fill="#222"/></svg>
<svg style="left:4px;top:273px" width="28" height="18" viewBox="0 0 28 18"><path d="M6 13l6 -7h10l-6 7z" fill="#888" stroke="#444" stroke-width=".8"/><path d="M6 13h10v3H6z" fill="#444"/><path d="M16 13l6 -7v3l-6 7z" fill="#555"/><path d="M24 17h-2.500l2.500 -2.500z" fill="#222"/></svg>
<div class="a" style="left:8px;top:291px;width:20px;height:18px;border:1px solid #555;border-radius:3px;background:#e6e6e6;box-shadow:inset 0 0 2px #999"></div>
<svg style="left:4px;top:291px" width="28" height="18" viewBox="0 0 28 18"><path d="M8 8L13 4L19 10L12 15Z" fill="#aaa" stroke="#333" stroke-width="1"/><path d="M10 7C9 2 13 1 14 5" fill="none" stroke="#333" stroke-width="1.2"/><path d="M18.500 9C21 10 21.500 13 20.500 15C19 14 18.500 12 18.500 9Z" fill="#222"/><path d="M24 17h-2.500l2.500 -2.500z" fill="#222"/></svg>
<svg style="left:4px;top:309px" width="28" height="18" viewBox="0 0 28 18"><path d="M14 2c3 5 5 7 5 10a5 5 0 0 1 -10 0c0 -3 2 -5 5 -10z" fill="#bbb" stroke="#666" stroke-width="1"/><path d="M24 17h-2.500l2.500 -2.500z" fill="#222"/></svg>
<svg style="left:4px;top:327px" width="28" height="18" viewBox="0 0 28 18"><circle cx="11.500" cy="6.500" r="3.800" fill="#2a2a2a"/><path d="M15 10L21 16" stroke="#2a2a2a" stroke-width="2"/><path d="M24 17h-2.500l2.500 -2.500z" fill="#222"/></svg>
<div class="a" style="left:8px;top:346px;width:21px;height:1px;background:#9a9a9a"></div>
<svg style="left:4px;top:347px" width="28" height="18" viewBox="0 0 28 18"><path d="M11.500 14V3L19 11" fill="none" stroke="#333" stroke-width="1.2"/><path d="M24 17h-2.500l2.500 -2.500z" fill="#222"/></svg>
<svg style="left:4px;top:366px" width="28" height="18" viewBox="0 0 28 18"><text x="14" y="15" font-family="Liberation Serif, serif" font-size="17" text-anchor="middle" fill="#222">T</text><path d="M24 17h-2.500l2.500 -2.500z" fill="#222"/></svg>
<svg style="left:4px;top:384px" width="28" height="18" viewBox="0 0 28 18"><path d="M11 2v12l3 -3l2 5l2 -1l-2 -5h4z" fill="#222"/><path d="M24 17h-2.500l2.500 -2.500z" fill="#222"/></svg>
<svg style="left:4px;top:402px" width="28" height="18" viewBox="0 0 28 18"><rect x="7.500" y="3.500" width="13" height="10" rx="3" fill="#a8a8a8" stroke="#555"/><path d="M24 17h-2.500l2.500 -2.500z" fill="#222"/></svg>
<div class="a" style="left:8px;top:421px;width:21px;height:1px;background:#9a9a9a"></div>
<svg style="left:4px;top:422px" width="28" height="18" viewBox="0 0 28 18"><circle cx="15" cy="6" r="3.500" fill="#ccc" stroke="#666"/><path d="M20 8c2 3 -2 6 -7 6c-5 0 -8 -3 -5 -6" fill="none" stroke="#333" stroke-width="1.2"/><path d="M11 11l4 3l-5 1z" fill="#222"/><path d="M24 17h-2.500l2.500 -2.500z" fill="#222"/></svg>
<svg style="left:4px;top:441px" width="28" height="18" viewBox="0 0 28 18"><path d="M20 8c2 3 -2 6 -7 6c-5 0 -8 -3 -5 -6c2 -2 6 -3 9 -2" fill="none" stroke="#333" stroke-width="1.2"/><path d="M11 11l4 3l-5 1z" fill="#222"/><rect x="17" y="2" width="5" height="3" fill="#333"/><path d="M24 17h-2.500l2.500 -2.500z" fill="#222"/></svg>
<svg style="left:4px;top:458px" width="28" height="18" viewBox="0 0 28 18"><path d="M10 9V5c0 -1 2 -1 2 0V3c0 -1 2 -1 2 0v1c0 -1 2 -1 2 0v2c0 -1 2 -1 2 0v6c0 2 -1 4 -3 4h-3c-2 0 -3 -2 -5 -5c-1 -1 0 -2 1 -1z" fill="#e8e8e8" stroke="#333" stroke-width="1"/><path d="M24 17h-2.500l2.500 -2.500z" fill="#222"/></svg>
<svg style="left:4px;top:476px" width="28" height="18" viewBox="0 0 28 18"><circle cx="12.500" cy="6.500" r="3.800" fill="#e6e6e6" stroke="#444" stroke-width="1.100"/><path d="M15.300 9.500L20 15.500" stroke="#4a4a4a" stroke-width="1.700"/></svg>

<div class="a" style="left:9px;top:500px;width:6px;height:6px;background:#fff;border:1px solid #333"></div>
<div class="a" style="left:7px;top:498px;width:6px;height:6px;background:#111"></div>
<svg style="left:20px;top:497px" width="9" height="9" viewBox="0 0 9 9"><path d="M2 6V3.500A1.500 1.500 0 0 1 3.500 2H6" fill="none" stroke="#222" stroke-width="1.2"/><path d="M5.500 0L8.500 2L5.500 4zM0 5.500L2 8.500L4 5.500z" fill="#222"/></svg>
<div class="a" style="left:14px;top:518px;width:16px;height:15px;background:#fff;border:1px solid #e8e8e8"></div>
<div class="a" style="left:6px;top:510px;width:16px;height:15px;background:#000;border:1px solid #ddd"></div>
<div class="a" style="left:11px;top:539px;width:14px;height:10px;background:#f0f0f0;border:1px solid #555"></div>
<div class="a" style="left:14px;top:540px;width:8px;height:8px;border:1px solid #555;border-radius:50%"></div>


<div class="a" style="left:774px;top:70px;width:226px;height:10px;background:linear-gradient(#5c5c5c,#3c3c3c);border-bottom:1px solid #2a2a2a"></div>
<svg style="left:794.3px;top:73px" width="6" height="4.800" viewBox="0 0 7 6"><path d="M3.500 0L0 3L3.500 6zM7 0L3.500 3L7 6z" fill="#d8d8d8"/></svg>
<svg style="left:988.5px;top:73px" width="6" height="4.800" viewBox="0 0 7 6"><path d="M0 0L3.500 3L0 6zM3.500 0L7 3L3.500 6z" fill="#d8d8d8"/></svg>
<div class="a" style="left:774px;top:80px;width:30px;height:685px;background:#686868;border-left:1px solid #555"></div>

<div class="a" style="left:775px;top:80px;width:28px;height:58px;background:#d6d6d6;border-bottom:1px solid #6a6a6a;border-right:1px solid #777"></div>
<div class="a" style="left:778px;top:83px;width:21px;height:1px;background:repeating-linear-gradient(90deg,#b4b4b4 0 1px,#e2e2e2 1px 2px)"></div>
<div class="a" style="left:778px;top:85px;width:21px;height:1px;background:repeating-linear-gradient(90deg,#b4b4b4 0 1px,#e2e2e2 1px 2px)"></div>
<div class="a" style="left:775px;top:138px;width:28px;height:81px;background:#d6d6d6;border-bottom:1px solid #6a6a6a;border-right:1px solid #777"></div>
<div class="a" style="left:778px;top:141px;width:21px;height:1px;background:repeating-linear-gradient(90deg,#b4b4b4 0 1px,#e2e2e2 1px 2px)"></div>
<div class="a" style="left:778px;top:143px;width:21px;height:1px;background:repeating-linear-gradient(90deg,#b4b4b4 0 1px,#e2e2e2 1px 2px)"></div>
<div class="a" style="left:775px;top:219px;width:28px;height:81px;background:#d6d6d6;border-bottom:1px solid #6a6a6a;border-right:1px solid #777"></div>
<div class="a" style="left:778px;top:222px;width:21px;height:1px;background:repeating-linear-gradient(90deg,#b4b4b4 0 1px,#e2e2e2 1px 2px)"></div>
<div class="a" style="left:778px;top:224px;width:21px;height:1px;background:repeating-linear-gradient(90deg,#b4b4b4 0 1px,#e2e2e2 1px 2px)"></div>
<div class="a" style="left:775px;top:300px;width:28px;height:34px;background:#d6d6d6;border-bottom:1px solid #6a6a6a;border-right:1px solid #777"></div>
<div class="a" style="left:778px;top:303px;width:21px;height:1px;background:repeating-linear-gradient(90deg,#b4b4b4 0 1px,#e2e2e2 1px 2px)"></div>
<div class="a" style="left:778px;top:305px;width:21px;height:1px;background:repeating-linear-gradient(90deg,#b4b4b4 0 1px,#e2e2e2 1px 2px)"></div>
<div class="a" style="left:775px;top:334px;width:28px;height:58px;background:#d6d6d6;border-bottom:1px solid #6a6a6a;border-right:1px solid #777"></div>
<div class="a" style="left:778px;top:337px;width:21px;height:1px;background:repeating-linear-gradient(90deg,#b4b4b4 0 1px,#e2e2e2 1px 2px)"></div>
<div class="a" style="left:778px;top:339px;width:21px;height:1px;background:repeating-linear-gradient(90deg,#b4b4b4 0 1px,#e2e2e2 1px 2px)"></div>
<div class="a" style="left:775px;top:392px;width:28px;height:35px;background:#d6d6d6;border-bottom:1px solid #6a6a6a;border-right:1px solid #777"></div>
<div class="a" style="left:778px;top:395px;width:21px;height:1px;background:repeating-linear-gradient(90deg,#b4b4b4 0 1px,#e2e2e2 1px 2px)"></div>
<div class="a" style="left:778px;top:397px;width:21px;height:1px;background:repeating-linear-gradient(90deg,#b4b4b4 0 1px,#e2e2e2 1px 2px)"></div>
<svg style="left:779px;top:91px" width="20" height="18" viewBox="0 0 20 18"><rect x="3" y="3" width="4" height="4" fill="#eee" stroke="#555"/><rect x="3" y="8" width="4" height="4" fill="#eee" stroke="#555"/><rect x="3" y="13" width="4" height="3" fill="#555"/><path d="M10 4h3c3 0 3 8 -2 10" fill="none" stroke="#333" stroke-width="1.600"/><path d="M9 4l3 -3v6z" fill="#333"/></svg>
<svg style="left:779px;top:115px" width="20" height="18" viewBox="0 0 20 18"><rect x="2.500" y="3.500" width="15" height="11" fill="#e8e8e8" stroke="#444"/><path d="M6 5.500v7l9 -3.500z" fill="#333"/></svg>
<svg style="left:779px;top:149px" width="20" height="18" viewBox="0 0 20 18"><circle cx="10" cy="9" r="4.500" fill="none" stroke="#444" stroke-width="1.300"/><circle cx="10" cy="9" r="1.500" fill="#333"/><path d="M10 1v16M2 9h16M4.300 3.300l11.400 11.400M15.700 3.300L4.300 14.700" stroke="#444" stroke-width="1"/></svg>
<svg style="left:779px;top:172px" width="20" height="18" viewBox="0 0 20 18"><rect x="2.500" y="3.500" width="15" height="12" fill="#eee" stroke="#555"/><path d="M3 15v-4l2 -2l1 2l2 -5l2 3l2 -4l2 5l2 -2l1 3v4z" fill="#444"/></svg>
<svg style="left:779px;top:196px" width="20" height="18" viewBox="0 0 20 18"><circle cx="10" cy="9" r="7" fill="#666" stroke="#444"/><circle cx="10" cy="9" r="6" fill="none" stroke="#999" stroke-width=".6"/><rect x="9" y="8" width="2.200" height="5" fill="#fff"/><rect x="9" y="4.500" width="2.200" height="2.200" fill="#fff"/></svg>
<svg style="left:779px;top:230px" width="20" height="18" viewBox="0 0 20 18"><path d="M2 6h9M7 12h9" stroke="#333" stroke-width="1.400"/><path d="M11 4c3 0 6 1 6 2s-3 2 -6 2z" fill="#333"/><path d="M7 10c-3 0 -5 1 -5 2s2 2 5 2z" fill="#333"/></svg>
<svg style="left:779px;top:253px" width="20" height="18" viewBox="0 0 20 18"><path d="M7 8h7v8H7z" fill="#eee" stroke="#333" stroke-width="1.400"/><path d="M10 8V2M7 8L4 3M13 8l3 -5" stroke="#333" stroke-width="1.600"/></svg>
<svg style="left:779px;top:276px" width="20" height="18" viewBox="0 0 20 18"><path d="M9 3h4v2l-1 1v3h4l1 1v2H7v-2l1 -1h3V6l-1 -1z" fill="#333"/><rect x="7" y="13.500" width="11" height="2" fill="#333"/><path d="M2 4h4M2 6h4M2 8h4" stroke="#333"/></svg>
<div class="t" style="left:784px;top:313.5px;font-size:14px;font-weight:bold;color:#333">¶</div>
<svg style="left:779px;top:345px" width="20" height="18" viewBox="0 0 20 18"><path d="M3 3l13 12M16 3L4 14" stroke="#222" stroke-width="2"/><path d="M2 12l3 -2l3 3l-3 3z" fill="#222"/><circle cx="4" cy="3.500" r="2" fill="none" stroke="#222"/></svg>
<svg style="left:779px;top:369px" width="20" height="18" viewBox="0 0 20 18"><path d="M3 12l7 -4l7 4l-7 4z" fill="#333"/><path d="M6 8h8v5H6z" fill="#222"/><path d="M10 2v6" stroke="#222"/></svg>
<div class="t" style="left:783.5px;top:406.5px;font-size:14px;color:#222;letter-spacing:-1px">A<span style="font-weight:normal;margin-left:-1.5px">|</span></div>
<div class="a" style="left:803px;top:80px;width:194px;height:685px;background:#d6d6d6;border-left:1px solid #555"></div>
<div class="a" style="left:997px;top:70px;width:3px;height:697px;background:#d0d4dc"></div>
<div class="a" style="left:804px;top:80.5px;width:193px;height:13px;background:linear-gradient(#9a9a9a,#b0b0b0);border-bottom:1px solid #8a8a8a"></div>
<div class="a" style="left:804px;top:80.5px;width:28px;height:13px;background:linear-gradient(#e6e6e6,#d6d6d6);border-right:1px solid #888"></div>
<div class="t" style="left:808px;top:83.0px;font-size:9.2px;color:#222;letter-spacing:-0.438px;">颜色</div>
<div class="a" style="left:832px;top:81.5px;width:27px;height:11px;background:linear-gradient(#b4b4b4,#a8a8a8);border-right:1px solid #7a7a7a"></div>
<div class="t" style="left:835.7px;top:83.0px;font-size:9.2px;color:#333;letter-spacing:-0.738px;">色板</div>
<div class="a" style="left:859px;top:81.5px;width:28px;height:11px;background:linear-gradient(#b4b4b4,#a8a8a8);border-right:1px solid #7a7a7a"></div>
<div class="t" style="left:863.8px;top:83.0px;font-size:9.2px;color:#333;letter-spacing:-0.438px;">样式</div>
<svg style="left:982px;top:84.0px" width="11" height="7" viewBox="0 0 11 7"><path d="M0 1h3.500L1.750 3.500z" fill="#333"/><path d="M4.500 0.500h6M4.500 2.500h6M4.500 4.500h6M4.500 6.500h6" stroke="#444" stroke-width="1"/></svg>

<div class="a" style="left:819px;top:112px;width:16px;height:16px;background:#fff;border:1px solid #b8b8b8"></div>
<div class="a" style="left:809px;top:103px;width:17px;height:16px;background:#000;border:1px solid #222;box-shadow:inset 0 0 0 1px #ddd"></div>

<div class="t" style="left:837.5px;top:105.5px;font-size:9px;color:#111">R</div>
<div class="a" style="left:849px;top:107px;width:75px;height:4px;background:linear-gradient(90deg,#000,#f00);border-top:1px solid #555"></div>
<svg style="left:845px;top:111px" width="8" height="6" viewBox="0 0 8 6"><path d="M4 0.500L7.500 5.500H0.500z" fill="#d4ecd4" stroke="#3a9a3a" stroke-width="1"/></svg>
<div class="a wb" style="left:928.5px;top:101px;width:28px;height:15.5px;border:1px solid #f0f0f0"></div>
<div class="t" style="left:931px;top:104.5px;font-size:9px;color:#111">0</div>
<div class="t" style="left:837.5px;top:125.5px;font-size:9px;color:#111">G</div>
<div class="a" style="left:849px;top:127px;width:75px;height:4px;background:linear-gradient(90deg,#000,#0f0);border-top:1px solid #555"></div>
<svg style="left:845px;top:131px" width="8" height="6" viewBox="0 0 8 6"><path d="M4 0.500L7.500 5.500H0.500z" fill="#d4ecd4" stroke="#3a9a3a" stroke-width="1"/></svg>
<div class="a wb" style="left:928.5px;top:121px;width:28px;height:15.5px;border:1px solid #f0f0f0"></div>
<div class="t" style="left:931px;top:124.5px;font-size:9px;color:#111">0</div>
<div class="t" style="left:837.5px;top:146.5px;font-size:9px;color:#111">B</div>
<div class="a" style="left:849px;top:148px;width:75px;height:4px;background:linear-gradient(90deg,#000,#00f);border-top:1px solid #555"></div>
<svg style="left:845px;top:152px" width="8" height="6" viewBox="0 0 8 6"><path d="M4 0.500L7.500 5.500H0.500z" fill="#d4ecd4" stroke="#3a9a3a" stroke-width="1"/></svg>
<div class="a wb" style="left:928.5px;top:142px;width:28px;height:15.5px;border:1px solid #f0f0f0"></div>
<div class="t" style="left:931px;top:145.5px;font-size:9px;color:#111">0</div>

<div class="a" style="left:809px;top:166px;width:149px;height:11px;background:linear-gradient(rgba(255,255,255,.45),rgba(255,255,255,0) 30%,rgba(0,0,0,.15) 45%,rgba(0,0,0,.92)),linear-gradient(90deg,#f00,#ff0 17%,#0c0 33%,#0cf 50%,#00f 67%,#f0c 83%,#f02)"></div>
<div class="a" style="left:958px;top:166px;width:6px;height:5px;background:#fff"></div>
<div class="a" style="left:958px;top:171px;width:6px;height:6px;background:#000"></div>
<div class="a" style="left:804px;top:183px;width:193px;height:2px;background:#3c3c3c"></div>

<div class="a" style="left:804px;top:185px;width:193px;height:13px;background:linear-gradient(#9a9a9a,#b0b0b0);border-bottom:1px solid #8a8a8a"></div>
<div class="a" style="left:804px;top:186px;width:27px;height:11px;background:linear-gradient(#b4b4b4,#a8a8a8);border-right:1px solid #7a7a7a"></div>
<div class="t" style="left:809px;top:187.5px;font-size:9.2px;color:#333;letter-spacing:-1.188px;">调整</div>
<div class="a" style="left:831px;top:185px;width:28px;height:13px;background:linear-gradient(#e6e6e6,#d6d6d6);border-right:1px solid #888"></div>
<div class="t" style="left:836.4px;top:187.5px;font-size:9.2px;color:#222;letter-spacing:-0.688px;">蒙版</div>
<svg style="left:982px;top:188.5px" width="11" height="7" viewBox="0 0 11 7"><path d="M0 1h3.500L1.750 3.500z" fill="#333"/><path d="M4.500 0.500h6M4.500 2.500h6M4.500 4.500h6M4.500 6.500h6" stroke="#444" stroke-width="1"/></svg>

<div class="a" style="left:809px;top:201px;width:19px;height:25px;background:#000"></div>

<svg style="left:933px;top:207px" width="11" height="11" viewBox="0 0 11 11"><rect x="0.500" y="0.500" width="10" height="10" fill="#8c8c8c" stroke="#555"/><circle cx="5" cy="5" r="3" fill="#e0e0e0" stroke="#666" stroke-width=".6"/><path d="M8 6.500v3M6.500 8h3" stroke="#333" stroke-width="1"/></svg>
<svg style="left:953px;top:206px" width="12" height="13" viewBox="0 0 12 13"><path d="M1.500 11.500l1 -4.500l4.500 -4.500l3.500 3.500l-4.500 4.500z" fill="#d8d8d8" stroke="#444" stroke-width="1"/><path d="M1.500 11.500l3.500 -3.500" stroke="#444"/><path d="M5.500 1.500l5 5" stroke="#444" stroke-width="1.600"/><path d="M10 8.500v3M8.500 10h3" stroke="#333" stroke-width="1"/></svg>
<div class="a" style="left:806px;top:229px;width:162px;height:1px;background:#a8a8a8"></div>
<div class="a" style="left:806px;top:230px;width:162px;height:1px;background:#ececec"></div>

<div class="t" style="left:835px;top:209px;font-size:9.6px;color:#111;letter-spacing:-0.812px;transform:skewX(-14deg)">未选择蒙版</div>
<div class="t" style="left:806.4px;top:239px;font-size:9.6px;color:#a4a4a4;letter-spacing:-0.320px;text-shadow:1px 1px 0 #f4f4f4">浓度:</div>
<div class="a" style="left:924px;top:234px;width:44px;height:17px;border:1px solid #b4b4b4;border-radius:2px;background:#dadada;box-shadow:1px 1px 0 #eee"></div>
<div class="a" style="left:811px;top:257px;width:153px;height:2px;background:#f0f0f0;border-top:1px solid #bcbcbc"></div>
<div class="t" style="left:806.4px;top:270px;font-size:9.6px;color:#a4a4a4;letter-spacing:-0.320px;text-shadow:1px 1px 0 #f4f4f4">羽化:</div>
<div class="a" style="left:924px;top:265px;width:44px;height:17px;border:1px solid #b4b4b4;border-radius:2px;background:#dadada;box-shadow:1px 1px 0 #eee"></div>
<div class="a" style="left:811px;top:288px;width:153px;height:2px;background:#f0f0f0;border-top:1px solid #bcbcbc"></div>
<div class="t" style="left:806.4px;top:302px;font-size:9.6px;color:#a4a4a4;letter-spacing:-0.320px;text-shadow:1px 1px 0 #f4f4f4">调整:</div>
<div class="a" style="left:905px;top:301px;width:62px;height:13px;border:1px solid #aaa;border-radius:2px;background:linear-gradient(#f0f0f0,#dcdcdc)"></div>
<div class="t" style="left:911.3px;top:303px;font-size:9.4px;color:#666;letter-spacing:0.167px;">蒙版边缘...</div>
<div class="a" style="left:905px;top:322px;width:62px;height:13px;border:1px solid #aaa;border-radius:2px;background:linear-gradient(#f0f0f0,#dcdcdc)"></div>
<div class="t" style="left:911.3px;top:324px;font-size:9.4px;color:#666;letter-spacing:0.167px;">颜色范围...</div>
<div class="a" style="left:905px;top:344px;width:62px;height:13px;border:1px solid #aaa;border-radius:2px;background:linear-gradient(#f0f0f0,#dcdcdc)"></div>
<div class="t" style="left:926px;top:346px;font-size:9.4px;color:#666;letter-spacing:-0.033px;">反相</div>

<div class="a" style="left:806px;top:364px;width:162px;height:1px;background:#a8a8a8"></div>
<div class="a" style="left:806px;top:365px;width:162px;height:1px;background:#ececec"></div>
<svg style="left:812px;top:367px" width="9" height="9" viewBox="0 0 9 9"><circle cx="4.500" cy="4.500" r="3.500" fill="none" stroke="#aaa" stroke-dasharray="1 1"/></svg>
<svg style="left:830px;top:366px" width="14" height="10" viewBox="0 0 14 10"><path d="M1 5l6 -4l6 4l-6 4z" fill="#f4f4f4" stroke="#7aa"/><path d="M5 4h4l-2 3z" fill="#2a8a9a"/></svg>
<svg style="left:853px;top:366px" width="11" height="10" viewBox="0 0 11 10"><ellipse cx="5.500" cy="5.500" rx="4.500" ry="3" fill="#aaa"/><path d="M0.500 0.500l10 9" stroke="#d22" stroke-width="1"/></svg>
<svg style="left:952px;top:366px" width="9" height="10" viewBox="0 0 9 10"><path d="M1.500 3h6l-0.700 6.500h-4.600z" fill="#e8e8e8" stroke="#888"/><path d="M0.500 2.500h8M3 1h3" stroke="#888"/></svg>
<div class="a" style="left:804px;top:380px;width:193px;height:2.5px;background:#3c3c3c"></div>

<div class="a" style="left:804px;top:382.5px;width:193px;height:13px;background:linear-gradient(#9a9a9a,#b0b0b0);border-bottom:1px solid #8a8a8a"></div>
<div class="a" style="left:804px;top:382.5px;width:27px;height:13px;background:linear-gradient(#e6e6e6,#d6d6d6);border-right:1px solid #888"></div>
<div class="t" style="left:809px;top:385.0px;font-size:9.2px;color:#222;letter-spacing:-0.837px;">图层</div>
<div class="a" style="left:831px;top:383.5px;width:28px;height:11px;background:linear-gradient(#b4b4b4,#a8a8a8);border-right:1px solid #7a7a7a"></div>
<div class="t" style="left:836.2px;top:385.0px;font-size:9.2px;color:#333;letter-spacing:-0.588px;">通道</div>
<div class="a" style="left:859px;top:383.5px;width:28px;height:11px;background:linear-gradient(#b4b4b4,#a8a8a8);border-right:1px solid #7a7a7a"></div>
<div class="t" style="left:864.4px;top:385.0px;font-size:9.2px;color:#333;letter-spacing:-0.738px;">路径</div>
<svg style="left:982px;top:386.0px" width="11" height="7" viewBox="0 0 11 7"><path d="M0 1h3.500L1.750 3.500z" fill="#333"/><path d="M4.500 0.500h6M4.500 2.500h6M4.500 4.500h6M4.500 6.500h6" stroke="#444" stroke-width="1"/></svg>

<div class="a wb" style="left:808px;top:399px;width:94px;height:16px;border:1px solid #f0f0f0;border-radius:2px;box-shadow:0 0 0 1px #c8c8c8"></div>

<div class="a" style="left:888px;top:400px;width:1px;height:14px;background:#ddd"></div>
<svg style="left:892px;top:406px" width="7" height="4"><path d="M0 0h7L3.500 4z" fill="#777"/></svg>

<div class="t" style="left:812.2px;top:403px;font-size:9.4px;color:#111;letter-spacing:-0.483px;">正常</div>
<div class="t" style="left:904.8px;top:403px;font-size:9.6px;color:#a4a4a4;letter-spacing:-0.229px;text-shadow:1px 1px 0 #f4f4f4">不透明度:</div>
<div class="t" style="left:923.8px;top:423.5px;font-size:9.6px;color:#a4a4a4;letter-spacing:-0.320px;text-shadow:1px 1px 0 #f4f4f4">填充:</div>
<div class="t" style="left:809px;top:423.5px;font-size:9.6px;color:#a4a4a4;letter-spacing:-0.153px;text-shadow:1px 1px 0 #f4f4f4">锁定:</div>
<div class="a" style="left:947px;top:399px;width:32px;height:15px;border:1px solid #aaa;background:#d8d8d8;box-shadow:inset 1px 1px 0 #c4c4c4"></div>
<div class="t" style="left:951.2px;top:402.5px;font-size:9px;color:#777;letter-spacing:-0.608px;">100%</div>
<div class="a" style="left:979px;top:399px;width:14px;height:15px;border:1px solid #aaa;background:linear-gradient(#f0f0f0,#dcdcdc)"></div>
<svg style="left:984px;top:404px" width="4" height="5"><path d="M0 0v5L3 2.500z" fill="#777"/></svg>
<div class="a" style="left:947px;top:420px;width:32px;height:15px;border:1px solid #aaa;background:#d8d8d8;box-shadow:inset 1px 1px 0 #c4c4c4"></div>
<div class="t" style="left:951.2px;top:423.5px;font-size:9px;color:#777;letter-spacing:-0.608px;">100%</div>
<div class="a" style="left:979px;top:420px;width:14px;height:15px;border:1px solid #aaa;background:linear-gradient(#f0f0f0,#dcdcdc)"></div>
<svg style="left:984px;top:425px" width="4" height="5"><path d="M0 0v5L3 2.500z" fill="#777"/></svg>

<div class="a" style="left:805px;top:416px;width:191px;height:1px;background:#b8b8b8"></div>
<div class="a" style="left:805px;top:417px;width:191px;height:1px;background:#ececec"></div>
<div class="a" style="left:836px;top:423px;width:9px;height:9px;border:1px solid #999;background:#f0f0f0"></div>
<div class="a" style="left:838px;top:425px;width:3px;height:3px;background:#aaa"></div><div class="a" style="left:841px;top:428px;width:3px;height:3px;background:#aaa"></div>
<svg style="left:849px;top:422px" width="11" height="11" viewBox="0 0 11 11"><path d="M10 1L4 7l1 1z" fill="#666"/><path d="M4 7c-2 0 -2 2 -3.500 3c2 .5 4 0 4.500 -2z" fill="#555"/></svg>
<svg style="left:863px;top:422px" width="11" height="11" viewBox="0 0 11 11"><path d="M5.500 0.500v10M0.500 5.500h10" stroke="#555" stroke-width="1"/><path d="M5.500 0l-2 2.500h4zM5.500 11l-2 -2.500h4zM0 5.500l2.500 -2v4zM11 5.500l-2.500 -2v4z" fill="#555"/></svg>
<svg style="left:878px;top:422px" width="9" height="11" viewBox="0 0 9 11"><rect x="0.500" y="5" width="8" height="5.500" fill="#777"/><path d="M2 5V3.500a2.500 2.500 0 0 1 5 0V5" fill="none" stroke="#777" stroke-width="1.300"/></svg>
<div class="a" style="left:805px;top:437px;width:191px;height:1px;background:#9a9a9a"></div>
<div class="a" style="left:805px;top:438px;width:191px;height:1px;background:#ececec"></div>
<!-- list bg -->
<div class="a" style="left:805px;top:439px;width:178px;height:312px;background:#d6d6d6"></div>
<div class="a" style="left:822px;top:439px;width:1px;height:312px;background:#a6a6a6"></div>

<div class="a" style="left:823px;top:437px;width:161px;height:73px;background:#d4d4d4"></div>
<div class="a" style="left:848px;top:437px;width:136px;height:14px;background:#dadada"></div>
<svg style="left:838px;top:440.5px" width="10" height="7.300" viewBox="0 0 11 8"><path d="M0.500 4C2 1 9 1 10.500 4C9 7.500 2 7.500 0.500 4z" fill="#666" stroke="#444" stroke-width=".8"/><circle cx="5.500" cy="3.800" r="2" fill="#1a1a1a"/><circle cx="4.800" cy="3" r=".8" fill="#ddd"/></svg>
<div class="t" style="left:850.8px;top:438.5px;font-size:9.4px;color:#111;letter-spacing:0.017px;">效果</div>
<div class="a" style="left:848px;top:451px;width:136px;height:1px;background:#9c9c9c"></div>
<div class="a" style="left:863px;top:452px;width:121px;height:14px;background:#dcdcdc"></div>
<svg style="left:852px;top:454.5px" width="10" height="7.300" viewBox="0 0 11 8"><path d="M0.500 4C2 1 9 1 10.500 4C9 7.500 2 7.500 0.500 4z" fill="#666" stroke="#444" stroke-width=".8"/><circle cx="5.500" cy="3.800" r="2" fill="#1a1a1a"/><circle cx="4.800" cy="3" r=".8" fill="#ddd"/></svg>
<div class="t" style="left:865.7px;top:454px;font-size:9.4px;color:#111;letter-spacing:-0.233px;">投影</div>
<div class="a" style="left:863px;top:466px;width:121px;height:1px;background:#9c9c9c"></div>
<div class="a" style="left:863px;top:467px;width:121px;height:14px;background:#dcdcdc"></div>
<svg style="left:852px;top:469.5px" width="10" height="7.300" viewBox="0 0 11 8"><path d="M0.500 4C2 1 9 1 10.500 4C9 7.500 2 7.500 0.500 4z" fill="#666" stroke="#444" stroke-width=".8"/><circle cx="5.500" cy="3.800" r="2" fill="#1a1a1a"/><circle cx="4.800" cy="3" r=".8" fill="#ddd"/></svg>
<div class="t" style="left:865.7px;top:469px;font-size:9.4px;color:#111;letter-spacing:-0.118px;">斜面和浮雕</div>
<div class="a" style="left:863px;top:481px;width:121px;height:1px;background:#9c9c9c"></div>
<div class="a" style="left:863px;top:482px;width:121px;height:14px;background:#dcdcdc"></div>
<svg style="left:852px;top:484.5px" width="10" height="7.300" viewBox="0 0 11 8"><path d="M0.500 4C2 1 9 1 10.500 4C9 7.500 2 7.500 0.500 4z" fill="#666" stroke="#444" stroke-width=".8"/><circle cx="5.500" cy="3.800" r="2" fill="#1a1a1a"/><circle cx="4.800" cy="3" r=".8" fill="#ddd"/></svg>
<div class="t" style="left:865.7px;top:484px;font-size:9.4px;color:#111;letter-spacing:-0.129px;">渐变叠加</div>
<div class="a" style="left:863px;top:496px;width:121px;height:1px;background:#9c9c9c"></div>
<div class="a" style="left:863px;top:497px;width:121px;height:14px;background:#dcdcdc"></div>
<svg style="left:852px;top:499.5px" width="10" height="7.300" viewBox="0 0 11 8"><path d="M0.500 4C2 1 9 1 10.500 4C9 7.500 2 7.500 0.500 4z" fill="#666" stroke="#444" stroke-width=".8"/><circle cx="5.500" cy="3.800" r="2" fill="#1a1a1a"/><circle cx="4.800" cy="3" r=".8" fill="#ddd"/></svg>
<div class="t" style="left:865.7px;top:499px;font-size:9.4px;color:#111;letter-spacing:-0.233px;">描边</div>
<div class="a" style="left:805px;top:511px;width:179px;height:1px;background:#9a9a9a"></div>
<div class="a" style="left:823px;top:512px;width:161px;height:30px;background:#d6d6d6"></div>
<div class="a" style="left:807px;top:519px;width:13px;height:13px;border:1px solid #b0b0b0;background:#dcdcdc"></div>
<svg style="left:808px;top:522px" width="10" height="7.300" viewBox="0 0 11 8"><path d="M0.500 4C2 1 9 1 10.500 4C9 7.500 2 7.500 0.500 4z" fill="#666" stroke="#444" stroke-width=".8"/><circle cx="5.500" cy="3.800" r="2" fill="#1a1a1a"/><circle cx="4.800" cy="3" r=".8" fill="#ddd"/></svg>
<div class="a wb" style="left:825px;top:513px;width:25.5px;height:25.5px;border:1px solid #111"></div>
<div class="t" style="left:832px;top:518px;font-family:'Liberation Serif',serif;font-size:15px;color:#555">T</div>
<div class="t" style="left:856px;top:521.8px;font-size:9px;color:#111;letter-spacing:-1.303px;">SUPER</div>
<div class="t" style="left:960px;top:519px;font-family:'Liberation Serif',serif;font-style:italic;font-weight:bold;font-size:11px;color:#484848">fx</div>
<div class="a" style="left:974px;top:512px;width:1px;height:30px;background:#c4c4c4"></div>
<svg style="left:976px;top:523px" width="6" height="4"><path d="M0 4L3 0.500L6 4z" fill="#333"/></svg>
<div class="a" style="left:823px;top:542px;width:161px;height:73px;background:#d4d4d4"></div>
<div class="a" style="left:848px;top:542px;width:136px;height:14px;background:#dadada"></div>
<svg style="left:838px;top:545.5px" width="10" height="7.300" viewBox="0 0 11 8"><path d="M0.500 4C2 1 9 1 10.500 4C9 7.500 2 7.500 0.500 4z" fill="#666" stroke="#444" stroke-width=".8"/><circle cx="5.500" cy="3.800" r="2" fill="#1a1a1a"/><circle cx="4.800" cy="3" r=".8" fill="#ddd"/></svg>
<div class="t" style="left:850.8px;top:543.5px;font-size:9.4px;color:#111;letter-spacing:0.017px;">效果</div>
<div class="a" style="left:848px;top:556px;width:136px;height:1px;background:#9c9c9c"></div>
<div class="a" style="left:863px;top:557px;width:121px;height:14px;background:#dcdcdc"></div>
<svg style="left:852px;top:559.5px" width="10" height="7.300" viewBox="0 0 11 8"><path d="M0.500 4C2 1 9 1 10.500 4C9 7.500 2 7.500 0.500 4z" fill="#666" stroke="#444" stroke-width=".8"/><circle cx="5.500" cy="3.800" r="2" fill="#1a1a1a"/><circle cx="4.800" cy="3" r=".8" fill="#ddd"/></svg>
<div class="t" style="left:865.7px;top:559px;font-size:9.4px;color:#111;letter-spacing:-0.233px;">投影</div>
<div class="a" style="left:863px;top:571px;width:121px;height:1px;background:#9c9c9c"></div>
<div class="a" style="left:863px;top:572px;width:121px;height:14px;background:#dcdcdc"></div>
<svg style="left:852px;top:574.5px" width="10" height="7.300" viewBox="0 0 11 8"><path d="M0.500 4C2 1 9 1 10.500 4C9 7.500 2 7.500 0.500 4z" fill="#666" stroke="#444" stroke-width=".8"/><circle cx="5.500" cy="3.800" r="2" fill="#1a1a1a"/><circle cx="4.800" cy="3" r=".8" fill="#ddd"/></svg>
<div class="t" style="left:865.7px;top:574px;font-size:9.4px;color:#111;letter-spacing:-0.118px;">斜面和浮雕</div>
<div class="a" style="left:863px;top:586px;width:121px;height:1px;background:#9c9c9c"></div>
<div class="a" style="left:863px;top:587px;width:121px;height:14px;background:#dcdcdc"></div>
<svg style="left:852px;top:589.5px" width="10" height="7.300" viewBox="0 0 11 8"><path d="M0.500 4C2 1 9 1 10.500 4C9 7.500 2 7.500 0.500 4z" fill="#666" stroke="#444" stroke-width=".8"/><circle cx="5.500" cy="3.800" r="2" fill="#1a1a1a"/><circle cx="4.800" cy="3" r=".8" fill="#ddd"/></svg>
<div class="t" style="left:865.7px;top:589px;font-size:9.4px;color:#111;letter-spacing:-0.129px;">渐变叠加</div>
<div class="a" style="left:863px;top:601px;width:121px;height:1px;background:#9c9c9c"></div>
<div class="a" style="left:863px;top:602px;width:121px;height:14px;background:#dcdcdc"></div>
<svg style="left:852px;top:604.5px" width="10" height="7.300" viewBox="0 0 11 8"><path d="M0.500 4C2 1 9 1 10.500 4C9 7.500 2 7.500 0.500 4z" fill="#666" stroke="#444" stroke-width=".8"/><circle cx="5.500" cy="3.800" r="2" fill="#1a1a1a"/><circle cx="4.800" cy="3" r=".8" fill="#ddd"/></svg>
<div class="t" style="left:865.7px;top:604px;font-size:9.4px;color:#111;letter-spacing:-0.233px;">描边</div>
<div class="a" style="left:805px;top:616px;width:179px;height:1px;background:#9a9a9a"></div>
<div class="a" style="left:823px;top:617px;width:161px;height:30px;background:#d6d6d6"></div>
<div class="a" style="left:807px;top:624px;width:13px;height:13px;border:1px solid #b0b0b0;background:#dcdcdc"></div>
<svg style="left:808px;top:627px" width="10" height="7.300" viewBox="0 0 11 8"><path d="M0.500 4C2 1 9 1 10.500 4C9 7.500 2 7.500 0.500 4z" fill="#666" stroke="#444" stroke-width=".8"/><circle cx="5.500" cy="3.800" r="2" fill="#1a1a1a"/><circle cx="4.800" cy="3" r=".8" fill="#ddd"/></svg>
<div class="a wb" style="left:825px;top:618px;width:25.5px;height:25.5px;border:1px solid #111"></div>
<div class="t" style="left:832px;top:623px;font-family:'Liberation Serif',serif;font-size:15px;color:#555">T</div>
<div class="t" style="left:856px;top:627px;font-size:9.4px;color:#111;letter-spacing:-0.038px;">深蓝色塑料</div>
<div class="t" style="left:960px;top:624px;font-family:'Liberation Serif',serif;font-style:italic;font-weight:bold;font-size:11px;color:#484848">fx</div>
<div class="a" style="left:974px;top:617px;width:1px;height:30px;background:#c4c4c4"></div>
<svg style="left:976px;top:628px" width="6" height="4"><path d="M0 4L3 0.500L6 4z" fill="#333"/></svg>
<div class="a" style="left:823px;top:647px;width:161px;height:73px;background:#d4d4d4"></div>
<div class="a" style="left:848px;top:647px;width:136px;height:14px;background:#dadada"></div>
<svg style="left:838px;top:650.5px" width="10" height="7.300" viewBox="0 0 11 8"><path d="M0.500 4C2 1 9 1 10.500 4C9 7.500 2 7.500 0.500 4z" fill="#666" stroke="#444" stroke-width=".8"/><circle cx="5.500" cy="3.800" r="2" fill="#1a1a1a"/><circle cx="4.800" cy="3" r=".8" fill="#ddd"/></svg>
<div class="t" style="left:850.8px;top:648.5px;font-size:9.4px;color:#111;letter-spacing:0.017px;">效果</div>
<div class="a" style="left:848px;top:661px;width:136px;height:1px;background:#9c9c9c"></div>
<div class="a" style="left:863px;top:662px;width:121px;height:14px;background:#dcdcdc"></div>
<svg style="left:852px;top:664.5px" width="10" height="7.300" viewBox="0 0 11 8"><path d="M0.500 4C2 1 9 1 10.500 4C9 7.500 2 7.500 0.500 4z" fill="#666" stroke="#444" stroke-width=".8"/><circle cx="5.500" cy="3.800" r="2" fill="#1a1a1a"/><circle cx="4.800" cy="3" r=".8" fill="#ddd"/></svg>
<div class="t" style="left:865.7px;top:664px;font-size:9.4px;color:#111;letter-spacing:-0.233px;">投影</div>
<div class="a" style="left:863px;top:676px;width:121px;height:1px;background:#9c9c9c"></div>
<div class="a" style="left:863px;top:677px;width:121px;height:14px;background:#dcdcdc"></div>
<svg style="left:852px;top:679.5px" width="10" height="7.300" viewBox="0 0 11 8"><path d="M0.500 4C2 1 9 1 10.500 4C9 7.500 2 7.500 0.500 4z" fill="#666" stroke="#444" stroke-width=".8"/><circle cx="5.500" cy="3.800" r="2" fill="#1a1a1a"/><circle cx="4.800" cy="3" r=".8" fill="#ddd"/></svg>
<div class="t" style="left:865.7px;top:679px;font-size:9.4px;color:#111;letter-spacing:-0.118px;">斜面和浮雕</div>
<div class="a" style="left:863px;top:691px;width:121px;height:1px;background:#9c9c9c"></div>
<div class="a" style="left:863px;top:692px;width:121px;height:14px;background:#dcdcdc"></div>
<svg style="left:852px;top:694.5px" width="10" height="7.300" viewBox="0 0 11 8"><path d="M0.500 4C2 1 9 1 10.500 4C9 7.500 2 7.500 0.500 4z" fill="#666" stroke="#444" stroke-width=".8"/><circle cx="5.500" cy="3.800" r="2" fill="#1a1a1a"/><circle cx="4.800" cy="3" r=".8" fill="#ddd"/></svg>
<div class="t" style="left:865.7px;top:694px;font-size:9.4px;color:#111;letter-spacing:-0.129px;">渐变叠加</div>
<div class="a" style="left:863px;top:706px;width:121px;height:1px;background:#9c9c9c"></div>
<div class="a" style="left:863px;top:707px;width:121px;height:14px;background:#dcdcdc"></div>
<svg style="left:852px;top:709.5px" width="10" height="7.300" viewBox="0 0 11 8"><path d="M0.500 4C2 1 9 1 10.500 4C9 7.500 2 7.500 0.500 4z" fill="#666" stroke="#444" stroke-width=".8"/><circle cx="5.500" cy="3.800" r="2" fill="#1a1a1a"/><circle cx="4.800" cy="3" r=".8" fill="#ddd"/></svg>
<div class="t" style="left:865.7px;top:709px;font-size:9.4px;color:#111;letter-spacing:-0.233px;">描边</div>

<div class="a" style="left:805px;top:720px;width:179px;height:1px;background:#9a9a9a"></div>
<div class="a" style="left:823px;top:721px;width:161px;height:30px;background:#3399ff"></div>
<div class="a" style="left:807px;top:728px;width:13px;height:13px;border:1px solid #b0b0b0;background:#dcdcdc"></div>
<div class="a" style="left:825px;top:722px;width:21px;height:27px;background:#000;border:1px solid #fff;box-shadow:0 0 0 1px #111"></div>
<div class="t" style="left:852px;top:731px;font-size:10px;color:#fff;font-style:italic;letter-spacing:-0.7px">背景</div>
<svg style="left:963px;top:731px" width="8" height="9" viewBox="0 0 8 9"><rect x="0.500" y="4" width="7" height="4.500" fill="#fff" stroke="#333" stroke-width=".8"/><path d="M2 4V2.800a2 2 0 0 1 4 0V4" fill="none" stroke="#333" stroke-width="1.200"/></svg>

<svg style="left:808px;top:731px" width="10" height="7.300" viewBox="0 0 11 8"><path d="M0.500 4C2 1 9 1 10.500 4C9 7.500 2 7.500 0.500 4z" fill="#666" stroke="#444" stroke-width=".8"/><circle cx="5.500" cy="3.800" r="2" fill="#1a1a1a"/><circle cx="4.800" cy="3" r=".8" fill="#ddd"/></svg>

<div class="a" style="left:983px;top:439px;width:13px;height:312px;background:#ececec;border-left:1px solid #d0d0d0"></div>
<svg style="left:986px;top:443px" width="7" height="4.500" viewBox="0 0 8 5"><path d="M0 4.500L4 0.500L8 4.500z" fill="#555"/></svg>
<svg style="left:986px;top:742.5px" width="7" height="4.500" viewBox="0 0 8 5"><path d="M0 0.500L4 4.500L8 0.500z" fill="#555"/></svg>
<div class="a" style="left:984.5px;top:478px;width:9.500px;height:257.500px;border:1px solid #b0b0b0;border-radius:2px;background:linear-gradient(90deg,#f8f8f8,#d8d8d8)"></div>
<div class="a" style="left:986.5px;top:603px;width:6px;height:7px;background:repeating-linear-gradient(#888 0 1px,#f4f4f4 1px 2px)"></div>
<!-- bottom bar -->
<div class="a" style="left:804px;top:751px;width:192px;height:13.500px;background:#d6d6d6;border-top:1px solid #9a9a9a"></div>
<div class="a" style="left:804px;top:764px;width:193px;height:1px;background:#666"></div>
<div class="a" style="left:996px;top:80px;width:1px;height:685px;background:#666"></div>
<svg style="left:838px;top:754.5px" width="13" height="7" viewBox="0 0 13 7"><rect x="0.500" y="1.500" width="6" height="4" rx="2" fill="none" stroke="#666" stroke-width="1.200"/><rect x="6.500" y="1.500" width="6" height="4" rx="2" fill="none" stroke="#666" stroke-width="1.200"/><path d="M4 3.500h5" stroke="#666" stroke-width="1.200"/></svg>
<div class="t" style="left:862px;top:751px;font-family:'Liberation Serif',serif;font-style:italic;font-weight:bold;font-size:11px;color:#555">fx</div>
<div class="a" style="left:872px;top:760px;width:2px;height:2px;background:#555"></div>
<svg style="left:883px;top:752.500px" width="10" height="10" viewBox="0 0 11 11"><rect x="0.500" y="0.500" width="10" height="10" fill="#aaa" stroke="#555"/><circle cx="5.500" cy="5.500" r="3" fill="#f4f4f4"/></svg>
<svg style="left:904px;top:752.500px" width="10" height="10" viewBox="0 0 11 11"><circle cx="5.500" cy="5.500" r="4.500" fill="#f4f4f4" stroke="#333" stroke-width="1.200"/><path d="M5.500 1a4.500 4.500 0 0 0 0 9z" fill="#333" transform="rotate(45 5.500 5.500)"/></svg>
<div class="a" style="left:915.500px;top:760px;width:2px;height:2px;background:#333"></div>
<svg style="left:925px;top:753.500px" width="10" height="8" viewBox="0 0 11 9"><path d="M0.500 1.500h4l1 1.500h5v5.500h-10z" fill="#f4f4f4" stroke="#555"/></svg>
<svg style="left:948px;top:753px" width="8" height="8" viewBox="0 0 8 8"><path d="M0.500 0.500h7v7h-7z" fill="#f4f4f4" stroke="#555"/><path d="M4 4h3.500v3.500H4z" fill="#555"/></svg>
<svg style="left:969px;top:752px" width="8" height="10" viewBox="0 0 9 12"><path d="M1.500 4h6l-0.700 7.500h-4.600z" fill="#f4f4f4" stroke="#444"/><path d="M0.500 3.500h8M3 1.500h3" stroke="#444" stroke-width="1.300"/><path d="M3.500 6v4M5.500 6v4" stroke="#777"/></svg>


<svg style="left:820px;top:655px" width="70" height="65" viewBox="820 655 70 65">
<g fill="rgba(255,255,255,.74)">
<ellipse cx="835" cy="682" rx="5.800" ry="8.300" transform="rotate(-12 835 682)"/>
<ellipse cx="847.700" cy="669" rx="5.800" ry="8.300" transform="rotate(-4 847.700 669)"/>
<ellipse cx="863" cy="669" rx="5.800" ry="8.300" transform="rotate(6 863 669)"/>
<ellipse cx="874.500" cy="682.500" rx="5.600" ry="8" transform="rotate(16 874.500 682.500)"/>
<path d="M855 685c7 0 11 6 16 12c5 5 8 9 6 14c-2 5 -8 5 -13 4.500c-4 -.5 -6 -1 -9 -1c-3 0 -5 .5 -9 1c-5 .5 -11 .5 -13 -4.500c-2 -5 1 -9 6 -14c5 -6 9 -12 16 -12z"/>
</g>
<text x="838.500" y="711" font-family="'Liberation Sans',sans-serif" font-weight="bold" font-size="26" fill="rgba(160,160,160,.5)" textLength="32" lengthAdjust="spacingAndGlyphs">du</text>
</svg>

<div class="t" style="left:769.5px;top:682px;font-size:35.5px;color:#fff;transform-origin:0 0;transform:scaleX(1.0407);font-weight:bold;-webkit-text-stroke:1px #fff;opacity:.8">Bai</div>
<div class="t" style="left:867px;top:684.5px;font-size:34px;color:#fff;letter-spacing:4.000px;opacity:.78;-webkit-text-stroke:.5px #fff;font-weight:700;font-family:"Noto Sans CJK SC",sans-serif">经验</div>
<div class="t" style="left:770px;top:722.5px;font-size:20.5px;color:rgba(255,255,255,.86);letter-spacing:0.574px;">jingyan.baidu.com</div>

<div class="a" style="left:0;top:0;width:1000px;height:1px;background:#6d7a90"></div>
<div class="a" style="left:0;top:0;width:1px;height:767px;background:#8694aa"></div>
<div class="a" style="left:1px;top:1px;width:2px;height:766px;background:#bcc8d8"></div>
<div class="a" style="left:3px;top:1px;width:1px;height:766px;background:#e0e4ea"></div>
<div class="a" style="left:0;top:765px;width:1000px;height:2px;background:#e2e4e8"></div>

</body></html>
